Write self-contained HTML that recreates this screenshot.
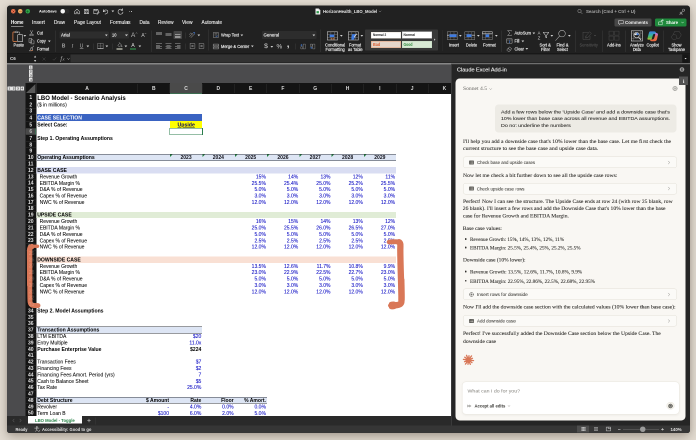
<!DOCTYPE html>
<html lang="en"><head><meta charset="utf-8"><title>HorizonHealth_LBO_Model - Excel</title>
<style>
html,body{margin:0;padding:0;}
body{width:696px;height:440px;overflow:hidden;background:#e3dcd2;position:relative;}
#stage{position:relative;width:696px;height:440px;overflow:hidden;}
#root{position:absolute;left:0;top:0;width:1392px;height:880px;transform:scale(0.5);transform-origin:0 0;
 font-family:"Liberation Sans", sans-serif;overflow:hidden;will-change:transform;}
.a{position:absolute;box-sizing:border-box;}
.t{white-space:nowrap;}
svg{overflow:visible;}
</style></head>
<body>
<div id="stage"><div id="root">
<div class="a" style="left:14px;top:11px;width:1366px;height:854.6px;border-radius:6.4px;box-shadow:0 7px 22px rgba(50,35,20,.34), 0 0 10px rgba(50,35,20,.10);"></div>
<div class="a" id="win" style="left:14px;top:11px;width:1366px;height:854.6px;border-radius:6.4px;overflow:hidden;background:#1e1e1e;"><div class="a" style="left:-14px;top:-11px;width:1392px;height:880px;">
<div class="a" style="left:14px;top:11px;width:1366px;height:95.4px;background:#212121;"></div>
<div class="a" style="left:14px;top:106.4px;width:1366px;height:20.4px;background:#1c1c1c;"></div>
<div class="a" style="left:22.2px;top:18.1px;width:8.8px;height:8.8px;background:#e8744f;border-radius:4.4px;"></div>
<svg class="a" style="left:22.6px;top:18.6px;width:8px;height:8px;" viewBox="-2 -2 4 4"><g fill="none" stroke="#8e2a14" stroke-width="0.5" stroke-linecap="round" stroke-linejoin="round"><path d="M-.9 -.9L.9 .9M.9 -.9L-.9 .9"/></g></svg>
<div class="a" style="left:36.4px;top:18.1px;width:8.8px;height:8.8px;background:#f0ae6a;border-radius:4.4px;"></div>
<svg class="a" style="left:36.8px;top:18.6px;width:8px;height:8px;" viewBox="-2 -2 4 4"><g fill="none" stroke="#b5651a" stroke-width="0.55" stroke-linecap="round" stroke-linejoin="round"><path d="M-1.1 0H1.1"/></g></svg>
<div class="a" style="left:50.8px;top:18.1px;width:8.8px;height:8.8px;background:#32a54b;border-radius:4.4px;"></div>
<svg class="a" style="left:51.2px;top:18.6px;width:8px;height:8px;" viewBox="-2 -2 4 4"><g fill="none" stroke="#0d5c1c" stroke-width="0.5" stroke-linecap="round" stroke-linejoin="round"><path d="M-1 0H1M0 -1V1"/></g></svg>
<div class="a t" style="top:12.6px;font-size:8px;line-height:20px;color:#ececec;font-weight:700;-webkit-text-stroke:0.12px #ececec;transform:scaleX(0.965);transform-origin:0 50%;left:78.4px;">AutoSave</div>
<div class="a" style="left:120.6px;top:18px;width:18.8px;height:9.2px;background:#2b2b2b;border-radius:4.6px;"></div>
<div class="a" style="left:121px;top:18px;width:9.2px;height:9.2px;background:#f4f4f4;border-radius:4.6px;"></div>
<svg class="a" style="left:146px;top:14.6px;width:16px;height:16px;" viewBox="-4 -4 8 8"><g fill="none" stroke="#cfcfcf" stroke-width="0.55" stroke-linecap="round" stroke-linejoin="round"><path d="M-2.4 -.2L0 -2.3L2.4 -.2V2.3H.8V.5H-.8V2.3H-2.4Z"/></g></svg>
<svg class="a" style="left:165px;top:14.6px;width:16px;height:16px;" viewBox="-4 -4 8 8"><g fill="none" stroke="#cfcfcf" stroke-width="0.55" stroke-linecap="round" stroke-linejoin="round"><path d="M-2.2 -2.2H1.4L2.2 -1.4V2.2H-2.2Z M-1.2 -2.2V-.7H1V-2.2 M-1.2 2.2V.5H1.2V2.2"/></g></svg>
<svg class="a" style="left:184px;top:14.6px;width:16px;height:16px;" viewBox="-4 -4 8 8"><g fill="none" stroke="#cfcfcf" stroke-width="0.55" stroke-linecap="round" stroke-linejoin="round"><path d="M-2.2 -2.2H1.4L2.2 -1.4V.2 M-2.2 -2.2V2.2H0 M-1.2 -2.2V-.7H1V-2.2 M.6 2.4L2.6 .2L3.2 .8L1.2 2.8Z"/></g></svg>
<svg class="a" style="left:203px;top:14.6px;width:16px;height:16px;" viewBox="-4 -4 8 8"><g fill="none" stroke="#cfcfcf" stroke-width="0.6" stroke-linecap="round" stroke-linejoin="round"><path d="M-2.2 -1.9V.2H-.1 M-2.1 .1C-1 -2.4 2.4 -2 2.3 .4C2.2 1.8 .8 2.4 -.4 2.6"/></g></svg>
<svg class="a" style="left:222.5px;top:21.3px;width:5.4px;height:3.4px;" viewBox="0 0 2.7 1.7"><path d="M0 0H2.7L1.35 1.7Z" fill="#d4d4d4"/></svg>
<svg class="a" style="left:232.6px;top:14.8px;width:16px;height:16px;" viewBox="-4 -4 8 8"><g fill="none" stroke="#cfcfcf" stroke-width="0.6" stroke-linecap="round" stroke-linejoin="round"><path d="M2.2 -2.9V-1.2H.5 M2 -1.3A2.5 2.5 0 1 0 2.5 .6"/></g></svg>
<div class="a" style="left:254.8px;top:22px;width:1.6px;height:1.6px;background:#dadada;border-radius:0.8px;"></div>
<div class="a" style="left:258.6px;top:22px;width:1.6px;height:1.6px;background:#dadada;border-radius:0.8px;"></div>
<div class="a" style="left:262.4px;top:22px;width:1.6px;height:1.6px;background:#dadada;border-radius:0.8px;"></div>
<svg class="a" style="left:631.2px;top:16.6px;width:9.6px;height:12px;" viewBox="0 0 4.8 6"><path d="M.3 0H3.2L4.8 1.6V5.7Q4.8 6 4.5 6H.3Q0 6 0 5.7V.3Q0 0 .3 0Z" fill="#f2f2f2"/><path d="M3.2 0V1.6H4.8Z" fill="#bdbdbd"/><rect x="1" y="2.6" width="2.4" height="2.2" fill="#2e9a4c"/></svg>
<div class="a t" style="top:12.6px;font-size:9.2px;line-height:20px;color:#e8e8e8;font-weight:700;transform:scaleX(0.915);transform-origin:0 50%;left:645.6px;">HorizonHealth_LBO_Model</div>
<svg class="a" style="left:757.6px;top:22px;width:4px;height:2px;" viewBox="0 0 2 1"><path d="M0 0L1 1L2 0" fill="none" stroke="#9a9a9a" stroke-width="0.45" stroke-linecap="round"/></svg>
<svg class="a" style="left:1154px;top:16.8px;width:12px;height:12px;" viewBox="-3 -3 6 6"><g fill="none" stroke="#a8a8a8" stroke-width="0.5" stroke-linecap="round" stroke-linejoin="round"><circle cx="-.5" cy="-.5" r="1.7"/><path d="M.8 .8L2.3 2.3"/></g></svg>
<div class="a t" style="top:12.8px;font-size:9px;line-height:20px;color:#a9a9a9;font-weight:700;transform:scaleX(0.978);transform-origin:0 50%;left:1171.6px;">Search (Cmd + Ctrl + U)</div>
<svg class="a" style="left:1358.2px;top:15.8px;width:14px;height:14px;" viewBox="-3.5 -3.5 7 7"><g fill="none" stroke="#bdbdbd" stroke-width="0.5" stroke-linecap="round" stroke-linejoin="round"><circle cx="1.1" cy="-1.3" r="1.15"/><circle cx="-1.5" cy="1.5" r="1.0"/><path d="M.3 -.5L-.8 .8"/><path d="M-2.9 3.1C-2.9 2 -.1 2 -.1 3.1" /></g></svg>
<div class="a t" style="top:35px;font-size:10px;line-height:20px;color:#ffffff;font-weight:700;transform:scaleX(0.899);transform-origin:0 50%;left:22px;">Home</div>
<div class="a t" style="top:35px;font-size:10px;line-height:20px;color:#f0f0f0;-webkit-text-stroke:0.2px #f0f0f0;transform:scaleX(1.039);transform-origin:0 50%;left:64px;">Insert</div>
<div class="a t" style="top:35px;font-size:10px;line-height:20px;color:#f0f0f0;-webkit-text-stroke:0.2px #f0f0f0;transform:scaleX(0.942);transform-origin:0 50%;left:108px;">Draw</div>
<div class="a t" style="top:35px;font-size:10px;line-height:20px;color:#f0f0f0;-webkit-text-stroke:0.2px #f0f0f0;transform:scaleX(0.961);transform-origin:0 50%;left:148px;">Page Layout</div>
<div class="a t" style="top:35px;font-size:10px;line-height:20px;color:#f0f0f0;-webkit-text-stroke:0.2px #f0f0f0;transform:scaleX(0.984);transform-origin:0 50%;left:220px;">Formulas</div>
<div class="a t" style="top:35px;font-size:10px;line-height:20px;color:#f0f0f0;-webkit-text-stroke:0.2px #f0f0f0;transform:scaleX(0.947);transform-origin:0 50%;left:279px;">Data</div>
<div class="a t" style="top:35px;font-size:10px;line-height:20px;color:#f0f0f0;-webkit-text-stroke:0.2px #f0f0f0;transform:scaleX(0.945);transform-origin:0 50%;left:316px;">Review</div>
<div class="a t" style="top:35px;font-size:10px;line-height:20px;color:#f0f0f0;-webkit-text-stroke:0.2px #f0f0f0;transform:scaleX(0.977);transform-origin:0 50%;left:364px;">View</div>
<div class="a t" style="top:35px;font-size:10px;line-height:20px;color:#f0f0f0;-webkit-text-stroke:0.2px #f0f0f0;transform:scaleX(0.958);transform-origin:0 50%;left:403px;">Automate</div>
<div class="a" style="left:22px;top:51.6px;width:25px;height:1.6px;background:#e8e8e8;border-radius:0.6px;"></div>
<div class="a" style="left:1229.4px;top:37px;width:73.2px;height:16.2px;background:#474747;border-radius:2.8px;"></div>
<svg class="a" style="left:1236px;top:39px;width:12px;height:12px;" viewBox="-3 -3 6 6"><g fill="none" stroke="#e4e4e4" stroke-width="0.5" stroke-linecap="round" stroke-linejoin="round"><path d="M-2.3 -1.9H2.3V1.2H-.6L-1.6 2.2V1.2H-2.3Z"/></g></svg>
<div class="a t" style="top:35px;font-size:9.4px;line-height:20px;color:#f2f2f2;font-weight:700;transform:scaleX(0.949);transform-origin:0 50%;left:1250.4px;">Comments</div>
<div class="a" style="left:1310px;top:36.6px;width:63.2px;height:16.8px;background:#1f8a3c;border-radius:3px;"></div>
<svg class="a" style="left:1315px;top:38px;width:14px;height:14px;" viewBox="-3.5 -3.5 7 7"><g fill="none" stroke="#e9f5ec" stroke-width="0.5" stroke-linecap="round" stroke-linejoin="round"><rect x="-2.2" y="-.6" width="3.4" height="2.9"/><path d="M.2 -.6V-2.3H2.4 M1.4 -3.2L2.5 -2.3L1.4 -1.4"/></g></svg>
<div class="a t" style="top:35px;font-size:9.4px;line-height:20px;color:#ffffff;font-weight:700;transform:scaleX(0.921);transform-origin:0 50%;left:1332.4px;">Share</div>
<svg class="a" style="left:1363px;top:44.3px;width:4.4px;height:2.2px;" viewBox="0 0 2.2 1.1"><path d="M0 0L1.1 1.1L2.2 0" fill="none" stroke="#d6ecd9" stroke-width="0.5" stroke-linecap="round"/></svg>
<svg class="a" style="left:24.8px;top:60.8px;width:21.2px;height:23.2px;" viewBox="0 0 10.6 11.6"><path d="M4.4 1.5H6.6Q7.3 1.5 7.3 2.2V3.8" fill="none" stroke="#b9b9b9" stroke-width=".55"/><path d="M2.6 1.5H1Q.4 1.5 .4 2.2V10.2Q.4 10.9 1 10.9H4.6" fill="none" stroke="#e8834a" stroke-width=".75"/><path d="M2.4 2.2V1.2H3Q3.8 -.2 4.6 1.2H5.2V2.2Z" fill="none" stroke="#c4c4c4" stroke-width=".5"/><rect x="5.1" y="4.2" width="5.1" height="7" rx=".5" fill="#272727" stroke="#cdcdcd" stroke-width=".6"/></svg>
<svg class="a" style="left:47.3px;top:69.5px;width:5.4px;height:3.4px;" viewBox="0 0 2.7 1.7"><path d="M0 0H2.7L1.35 1.7Z" fill="#d4d4d4"/></svg>
<div class="a t" style="top:80.2px;font-size:8.9px;line-height:20px;color:#f0f0f0;-webkit-text-stroke:0.26px #f0f0f0;transform:scaleX(0.916);transform-origin:0 50%;left:27.2px;">Paste</div>
<svg class="a" style="left:56px;top:59px;width:14px;height:14px;" viewBox="-3.5 -3.5 7 7"><g fill="none" stroke="#b2b2b2" stroke-width="0.5" stroke-linecap="round" stroke-linejoin="round"><path d="M-1.3 -2.6L.9 1.2M1.3 -2.6L-.9 1.2"/><circle cx="-1.1" cy="2" r=".8"/><circle cx="1.1" cy="2" r=".8"/></g></svg>
<div class="a t" style="top:56px;font-size:8.9px;line-height:20px;color:#f0f0f0;-webkit-text-stroke:0.26px #f0f0f0;transform:scaleX(0.869);transform-origin:0 50%;left:74px;">Cut</div>
<svg class="a" style="left:56.2px;top:75px;width:14px;height:14px;" viewBox="-3.5 -3.5 7 7"><g fill="none" stroke="#b2b2b2" stroke-width="0.5" stroke-linecap="round" stroke-linejoin="round"><path d="M-2.3 -2.6H.3V1.6H-2.3Z M-.4 -1.2H1.5L2.5 -.2V2.9H-.4Z"/></g></svg>
<div class="a t" style="top:72px;font-size:8.9px;line-height:20px;color:#f0f0f0;-webkit-text-stroke:0.26px #f0f0f0;transform:scaleX(0.840);transform-origin:0 50%;left:74px;">Copy</div>
<svg class="a" style="left:95.7px;top:80.7px;width:5.4px;height:3.4px;" viewBox="0 0 2.7 1.7"><path d="M0 0H2.7L1.35 1.7Z" fill="#d4d4d4"/></svg>
<svg class="a" style="left:57px;top:90.2px;width:14px;height:14px;" viewBox="-3.5 -3.5 7 7"><g fill="none" stroke="#b2b2b2" stroke-width="0.55" stroke-linecap="round" stroke-linejoin="round"><path d="M1.8 -2.6L-.2 -.4 M-.9 -1L.9 .6L-.6 2.4H-2.6Q-1.2 1 -.9 -1Z" /></g></svg>
<div class="a" style="left:61.2px;top:100.6px;width:5.2px;height:1.2px;background:#e8834a;"></div>
<div class="a t" style="top:87.6px;font-size:8.9px;line-height:20px;color:#f0f0f0;-webkit-text-stroke:0.26px #f0f0f0;transform:scaleX(0.854);transform-origin:0 50%;left:74px;">Format</div>
<div class="a" style="left:110.75px;top:61px;width:0.9px;height:43px;background:#3c3c3c;"></div>
<div class="a" style="left:118.8px;top:62.8px;width:98.8px;height:14.6px;background:#2d2d2d;border-radius:1.6px;"></div>
<div class="a t" style="top:60px;font-size:8.9px;line-height:20px;color:#f0f0f0;-webkit-text-stroke:0.26px #f0f0f0;transform:scaleX(0.991);transform-origin:0 50%;left:122.4px;">Arial</div>
<svg class="a" style="left:210.1px;top:68.7px;width:5.4px;height:3.4px;" viewBox="0 0 2.7 1.7"><path d="M0 0H2.7L1.35 1.7Z" fill="#d4d4d4"/></svg>
<div class="a" style="left:221.2px;top:62.8px;width:36.4px;height:14.6px;background:#2d2d2d;border-radius:1.6px;"></div>
<div class="a t" style="top:60px;font-size:8.9px;line-height:20px;color:#f0f0f0;-webkit-text-stroke:0.26px #f0f0f0;transform:scaleX(0.891);transform-origin:0 50%;left:224.4px;">10</div>
<svg class="a" style="left:250.1px;top:68.7px;width:5.4px;height:3.4px;" viewBox="0 0 2.7 1.7"><path d="M0 0H2.7L1.35 1.7Z" fill="#d4d4d4"/></svg>
<div class="a t" style="top:60.4px;font-size:12.8px;line-height:20px;color:#bcbcbc;left:262px;">A</div>
<svg class="a" style="left:270.2px;top:63px;width:6px;height:6px;" viewBox="-1.5 -1.5 3 3"><g fill="none" stroke="#b2b2b2" stroke-width="0.4" stroke-linecap="round" stroke-linejoin="round"><path d="M-.7 .4L0 -.4L.7 .4"/></g></svg>
<div class="a t" style="top:61.2px;font-size:10.4px;line-height:20px;color:#bcbcbc;left:282.4px;">A</div>
<svg class="a" style="left:288.2px;top:63.8px;width:6px;height:6px;" viewBox="-1.5 -1.5 3 3"><g fill="none" stroke="#b2b2b2" stroke-width="0.4" stroke-linecap="round" stroke-linejoin="round"><path d="M-.6 -.3L0 .4L.6 -.3"/></g></svg>
<div class="a t" style="top:82.4px;font-size:10px;line-height:20px;color:#a2a2a2;font-weight:700;left:123.6px;">B</div>
<div class="a t" style="top:82.4px;font-size:10px;line-height:20px;color:#b4b4b4;font-family:'Liberation Serif', serif;font-style:italic;left:143.2px;">I</div>
<div class="a t" style="top:82.4px;font-size:10px;line-height:20px;color:#b4b4b4;text-decoration:underline;left:159.6px;">U</div>
<svg class="a" style="left:172.5px;top:91.1px;width:5.4px;height:3.4px;" viewBox="0 0 2.7 1.7"><path d="M0 0H2.7L1.35 1.7Z" fill="#d4d4d4"/></svg>
<div class="a" style="left:186.55px;top:87px;width:0.9px;height:11.6px;background:#3c3c3c;"></div>
<svg class="a" style="left:194px;top:85.4px;width:14px;height:14px;" viewBox="-3.5 -3.5 7 7"><g fill="none" stroke="#8e8e8e" stroke-width="0.45" stroke-linecap="round" stroke-linejoin="round"><rect x="-2.7" y="-2.7" width="5.4" height="5.4"/><path d="M0 -2.7V2.7M-2.7 0H2.7" stroke-width=".35"/><path d="M-2.7 2.7H2.7" stroke="#d0d0d0" stroke-width=".6"/></g></svg>
<svg class="a" style="left:211.3px;top:91.1px;width:5.4px;height:3.4px;" viewBox="0 0 2.7 1.7"><path d="M0 0H2.7L1.35 1.7Z" fill="#d4d4d4"/></svg>
<div class="a" style="left:224.55px;top:87px;width:0.9px;height:11.6px;background:#3c3c3c;"></div>
<svg class="a" style="left:231.6px;top:83.4px;width:14px;height:14px;" viewBox="-3.5 -3.5 7 7"><g fill="none" stroke="#b2b2b2" stroke-width="0.5" stroke-linecap="round" stroke-linejoin="round"><path d="M-1.6 .3L.3 -1.8L2 0L.1 1.9Z M-.4 -2.6L.3 -1.8 M2.3 .8Q2.9 1.7 2.3 2Q1.7 1.7 2.3 .8"/></g></svg>
<div class="a" style="left:232.8px;top:97px;width:12px;height:1.8px;background:#f3f6e2;"></div>
<svg class="a" style="left:249.3px;top:91.1px;width:5.4px;height:3.4px;" viewBox="0 0 2.7 1.7"><path d="M0 0H2.7L1.35 1.7Z" fill="#d4d4d4"/></svg>
<div class="a t" style="top:80.8px;font-size:10.4px;line-height:20px;color:#d8d8d8;left:66px;width:400px;text-align:center;"><span>A</span></div>
<div class="a" style="left:260.2px;top:97px;width:11.6px;height:1.8px;background:#35a853;"></div>
<svg class="a" style="left:276.5px;top:91.1px;width:5.4px;height:3.4px;" viewBox="0 0 2.7 1.7"><path d="M0 0H2.7L1.35 1.7Z" fill="#d4d4d4"/></svg>
<div class="a" style="left:302.75px;top:61px;width:0.9px;height:43px;background:#3c3c3c;"></div>
<div class="a" style="left:312.4px;top:64.56px;width:11.2px;height:0.88px;background:#a6a6a6;"></div>
<div class="a" style="left:312.4px;top:66.76px;width:11.2px;height:0.88px;background:#a6a6a6;"></div>
<div class="a" style="left:312.4px;top:68.96px;width:11.2px;height:0.88px;background:#a6a6a6;"></div>
<div class="a" style="left:331.4px;top:66.96px;width:11.2px;height:0.88px;background:#a6a6a6;"></div>
<div class="a" style="left:331.4px;top:69.16px;width:11.2px;height:0.88px;background:#a6a6a6;"></div>
<div class="a" style="left:331.4px;top:71.36px;width:11.2px;height:0.88px;background:#a6a6a6;"></div>
<div class="a" style="left:347px;top:62px;width:17.4px;height:15.8px;background:#464646;border-radius:1.8px;"></div>
<div class="a" style="left:350px;top:69.36px;width:11.2px;height:0.88px;background:#e2e2e2;"></div>
<div class="a" style="left:350px;top:71.56px;width:11.2px;height:0.88px;background:#e2e2e2;"></div>
<div class="a" style="left:350px;top:73.76px;width:11.2px;height:0.88px;background:#e2e2e2;"></div>
<div class="a" style="left:312.4px;top:87.16px;width:11.2px;height:0.88px;background:#a6a6a6;"></div>
<div class="a" style="left:312.4px;top:89.56px;width:7.2px;height:0.88px;background:#a6a6a6;"></div>
<div class="a" style="left:312.4px;top:91.96px;width:11.2px;height:0.88px;background:#a6a6a6;"></div>
<div class="a" style="left:312.4px;top:94.36px;width:7.2px;height:0.88px;background:#a6a6a6;"></div>
<div class="a" style="left:312.4px;top:96.76px;width:11.2px;height:0.88px;background:#a6a6a6;"></div>
<div class="a" style="left:331.4px;top:87.16px;width:11.2px;height:0.88px;background:#a6a6a6;"></div>
<div class="a" style="left:333.4px;top:89.56px;width:7.2px;height:0.88px;background:#a6a6a6;"></div>
<div class="a" style="left:331.4px;top:91.96px;width:11.2px;height:0.88px;background:#a6a6a6;"></div>
<div class="a" style="left:333.4px;top:94.36px;width:7.2px;height:0.88px;background:#a6a6a6;"></div>
<div class="a" style="left:331.4px;top:96.76px;width:11.2px;height:0.88px;background:#a6a6a6;"></div>
<div class="a" style="left:349.6px;top:87.16px;width:11.2px;height:0.88px;background:#a6a6a6;"></div>
<div class="a" style="left:353.6px;top:89.56px;width:7.2px;height:0.88px;background:#a6a6a6;"></div>
<div class="a" style="left:349.6px;top:91.96px;width:11.2px;height:0.88px;background:#a6a6a6;"></div>
<div class="a" style="left:353.6px;top:94.36px;width:7.2px;height:0.88px;background:#a6a6a6;"></div>
<div class="a" style="left:349.6px;top:96.76px;width:11.2px;height:0.88px;background:#a6a6a6;"></div>
<div class="a" style="left:370.15px;top:65px;width:0.9px;height:12px;background:#3c3c3c;"></div>
<div class="a" style="left:370.15px;top:87px;width:0.9px;height:11.6px;background:#3c3c3c;"></div>
<svg class="a" style="left:377px;top:63px;width:14px;height:14px;" viewBox="-3.5 -3.5 7 7"><g fill="none" stroke="#b2b2b2" stroke-width="0.5" stroke-linecap="round" stroke-linejoin="round"><path d="M-2.4 1.6L1 -1.8M-1.1 2.6L2.3 -.8" stroke-width=".5"/><path d="M1.2 -2.6H2.8V-1" stroke="#4a86e8"/><path d="M-2.6 -.4L-1.2 -2.2L.2 -.6" stroke-width=".4"/></g></svg>
<svg class="a" style="left:395.3px;top:68.7px;width:5.4px;height:3.4px;" viewBox="0 0 2.7 1.7"><path d="M0 0H2.7L1.35 1.7Z" fill="#d4d4d4"/></svg>
<svg class="a" style="left:378px;top:85.4px;width:14px;height:14px;" viewBox="-3.5 -3.5 7 7"><g fill="none" stroke="#b2b2b2" stroke-width="0.5" stroke-linecap="round" stroke-linejoin="round"><path d="M-2.4 -2.4V2.4 M-2.4 -2.4H2.4V2.4H-2.4" stroke-width=".4"/><path d="M1.4 0H-1M-.1 -.9L-1 0L-.1 .9"/></g></svg>
<svg class="a" style="left:396px;top:85.4px;width:14px;height:14px;" viewBox="-3.5 -3.5 7 7"><g fill="none" stroke="#b2b2b2" stroke-width="0.5" stroke-linecap="round" stroke-linejoin="round"><path d="M-2.4 -2.4V2.4 M-2.4 -2.4H2.4V2.4H-2.4" stroke-width=".4"/><path d="M-1.4 0H1M.1 -.9L1 0L.1 .9"/></g></svg>
<div class="a" style="left:417.15px;top:59px;width:0.9px;height:42px;background:#3c3c3c;"></div>
<svg class="a" style="left:425px;top:63px;width:14px;height:14px;" viewBox="-3.5 -3.5 7 7"><g fill="none" stroke="#b2b2b2" stroke-width="0.5" stroke-linecap="round" stroke-linejoin="round"><path d="M-2.4 -2.6H2.4V2.6H-2.4Z" stroke-width=".4"/><path d="M-1.3 -1.2H1.3M-1.3 0H.9" stroke-width=".4"/><path d="M-.2 1.4H1.1Q1.7 1 1.1 .4" stroke="#4a86e8"/></g></svg>
<div class="a t" style="top:60px;font-size:8.9px;line-height:20px;color:#f0f0f0;-webkit-text-stroke:0.26px #f0f0f0;transform:scaleX(0.909);transform-origin:0 50%;left:442px;">Wrap Text</div>
<svg class="a" style="left:481.3px;top:68.7px;width:5.4px;height:3.4px;" viewBox="0 0 2.7 1.7"><path d="M0 0H2.7L1.35 1.7Z" fill="#d4d4d4"/></svg>
<svg class="a" style="left:425px;top:85.6px;width:14px;height:14px;" viewBox="-3.5 -3.5 7 7"><g fill="none" stroke="#b2b2b2" stroke-width="0.5" stroke-linecap="round" stroke-linejoin="round"><rect x="-2.6" y="-2.4" width="5.2" height="4.8" stroke-width=".45"/><path d="M-2.6 -.9H2.6M-2.6 .9H2.6" stroke-width=".35"/><path d="M-1.5 0H1.5M-.9 -.5L-1.5 0L-.9 .5M.9 -.5L1.5 0L.9 .5" stroke-width=".35"/></g></svg>
<div class="a t" style="top:82.6px;font-size:8.9px;line-height:20px;color:#f0f0f0;-webkit-text-stroke:0.26px #f0f0f0;transform:scaleX(0.900);transform-origin:0 50%;left:442px;">Merge &amp; Center</div>
<svg class="a" style="left:501.7px;top:91.3px;width:5.4px;height:3.4px;" viewBox="0 0 2.7 1.7"><path d="M0 0H2.7L1.35 1.7Z" fill="#d4d4d4"/></svg>
<div class="a" style="left:523.8px;top:62.4px;width:109.2px;height:15.2px;background:#2d2d2d;border-radius:1.6px;"></div>
<div class="a t" style="top:60px;font-size:8.9px;line-height:20px;color:#f0f0f0;-webkit-text-stroke:0.26px #f0f0f0;transform:scaleX(0.988);transform-origin:0 50%;left:527.2px;">General</div>
<svg class="a" style="left:624.9px;top:68.7px;width:5.4px;height:3.4px;" viewBox="0 0 2.7 1.7"><path d="M0 0H2.7L1.35 1.7Z" fill="#d4d4d4"/></svg>
<div class="a t" style="top:82.4px;font-size:13.6px;line-height:20px;color:#d6d6d6;left:332px;width:400px;text-align:center;"><span>$</span></div>
<svg class="a" style="left:541.3px;top:91.5px;width:5.4px;height:3.4px;" viewBox="0 0 2.7 1.7"><path d="M0 0H2.7L1.35 1.7Z" fill="#d4d4d4"/></svg>
<div class="a t" style="top:82.6px;font-size:12.8px;line-height:20px;color:#d6d6d6;left:358.8px;width:400px;text-align:center;"><span>%</span></div>
<div class="a t" style="top:77.2px;font-size:20px;line-height:20px;color:#d6d6d6;font-weight:700;left:376.4px;width:400px;text-align:center;"><span>,</span></div>
<div class="a" style="left:590.55px;top:87px;width:0.9px;height:11.6px;background:#3c3c3c;"></div>
<svg class="a" style="left:599px;top:85.6px;width:14px;height:14px;" viewBox="-3.5 -3.5 7 7"><g fill="none" stroke="#b2b2b2" stroke-width="0.5" stroke-linecap="round" stroke-linejoin="round"><path d="M.4 -2.4H2.4V2.4H.4Z M-2 .2H-.4V2.4H-2Z" stroke-width=".4" stroke="#9a9a9a"/><path d="M-2.4 -1.4H-.6M-1.5 -2.3V-.5" stroke="#4a86e8" stroke-width=".45"/></g></svg>
<svg class="a" style="left:618px;top:85.6px;width:14px;height:14px;" viewBox="-3.5 -3.5 7 7"><g fill="none" stroke="#b2b2b2" stroke-width="0.5" stroke-linecap="round" stroke-linejoin="round"><path d="M.4 -2.4H2.4V2.4H.4Z M-2 -2.4H-.4V-.2H-2Z" stroke-width=".4" stroke="#9a9a9a"/><path d="M-2.4 1.4H-.4M-1.2 .6L-.4 1.4L-1.2 2.2" stroke="#4a86e8" stroke-width=".45"/></g></svg>
<div class="a" style="left:640.75px;top:59px;width:0.9px;height:45px;background:#3c3c3c;"></div>
<svg class="a" style="left:654.4px;top:62.8px;width:21.6px;height:17.6px;" viewBox="0 0 10.8 8.8"><rect x=".3" y=".3" width="10.2" height="8.2" fill="none" stroke="#cfcfcf" stroke-width=".55"/><path d="M.3 3.168 H10.5 M.3 5.984 H10.5 M3.888 .3V8.5 M7.344 .3V8.5" stroke="#9c9c9c" stroke-width=".35" fill="none"/><rect x="2.6" y="3.1" width="4.6" height="2.4" fill="#3f7be0"/><rect x="4.4" y="6.4" width=".9" height="1.6" fill="#e8834a"/><rect x="6.4" y="6.4" width=".9" height="1.6" fill="#e8834a"/></svg>
<svg class="a" style="left:679.9px;top:69.5px;width:5.4px;height:3.4px;" viewBox="0 0 2.7 1.7"><path d="M0 0H2.7L1.35 1.7Z" fill="#d4d4d4"/></svg>
<div class="a t" style="top:80.4px;font-size:8.9px;line-height:20px;color:#f0f0f0;-webkit-text-stroke:0.26px #f0f0f0;transform:scaleX(0.910);transform-origin:0 50%;left:650px;">Conditional</div>
<div class="a t" style="top:89.4px;font-size:8.9px;line-height:20px;color:#f0f0f0;-webkit-text-stroke:0.26px #f0f0f0;transform:scaleX(0.905);transform-origin:0 50%;left:650.8px;">Formatting</div>
<svg class="a" style="left:696px;top:62.8px;width:21.2px;height:17.6px;" viewBox="0 0 10.6 8.8"><rect x=".3" y=".3" width="10" height="8.2" fill="none" stroke="#cfcfcf" stroke-width=".55"/><path d="M.3 3.168 H10.3 M.3 5.984 H10.3 M3.816 .3V8.5 M7.208 .3V8.5" stroke="#9c9c9c" stroke-width=".35" fill="none"/><path d="M4.2 2.6H7.4V5.4L5.6 8.2H3.4V5.2Z" fill="#3f7be0"/><path d="M8.6 2.2L6.2 5.8" stroke="#d8d8d8" stroke-width=".9" fill="none"/></svg>
<svg class="a" style="left:720.5px;top:69.5px;width:5.4px;height:3.4px;" viewBox="0 0 2.7 1.7"><path d="M0 0H2.7L1.35 1.7Z" fill="#d4d4d4"/></svg>
<div class="a t" style="top:80.4px;font-size:8.9px;line-height:20px;color:#f0f0f0;-webkit-text-stroke:0.26px #f0f0f0;transform:scaleX(0.854);transform-origin:0 50%;left:698.4px;">Format</div>
<div class="a t" style="top:89.4px;font-size:8.9px;line-height:20px;color:#f0f0f0;-webkit-text-stroke:0.26px #f0f0f0;transform:scaleX(0.887);transform-origin:0 50%;left:696px;">as Table</div>
<div class="a" style="left:729.6px;top:59.4px;width:146.4px;height:41.6px;background:#383838;border-radius:1.6px;"></div>
<div class="a" style="left:742px;top:63.6px;width:60.4px;height:13.4px;background:#ffffff;border:0.7px solid #e9e2d8;"></div>
<div class="a t" style="top:60.4px;font-size:6.6px;line-height:20px;color:#222;font-weight:700;transform:scaleX(0.936);transform-origin:0 50%;left:745.6px;">Normal 2</div>
<div class="a" style="left:803.8px;top:63.2px;width:60.4px;height:14px;background:#ffffff;border:0.9px solid #cfcfcf;"></div>
<div class="a t" style="top:60.4px;font-size:6.6px;line-height:20px;color:#222;font-weight:700;transform:scaleX(1.021);transform-origin:0 50%;left:806.8px;">Normal</div>
<div class="a" style="left:742px;top:82.2px;width:60.4px;height:13.8px;background:#e4d6cb;border:0.9px solid #e39a74;"></div>
<div class="a t" style="top:79.2px;font-size:8.8px;line-height:20px;color:#dc5b2e;font-weight:700;transform:scaleX(0.866);transform-origin:0 50%;left:745.6px;">Bad</div>
<div class="a" style="left:803.8px;top:82px;width:60.4px;height:14.2px;background:#d9ead5;border:0.8px solid #c4d9bf;"></div>
<div class="a t" style="top:79.2px;font-size:8.8px;line-height:20px;color:#2f8a3c;font-weight:700;transform:scaleX(0.784);transform-origin:0 50%;left:806.8px;">Good</div>
<svg class="a" style="left:868.4px;top:77.2px;width:3px;height:4.4px;" viewBox="0 0 1.5 2.2"><path d="M0 0L1.5 1.1L0 2.2Z" fill="#c8c8c8"/></svg>
<div class="a" style="left:884px;top:61.2px;width:0.8px;height:1px;background:#3a3a3a;"></div>
<div class="a" style="left:884px;top:63.2px;width:0.8px;height:1px;background:#3a3a3a;"></div>
<div class="a" style="left:884px;top:65.2px;width:0.8px;height:1px;background:#3a3a3a;"></div>
<div class="a" style="left:884px;top:67.2px;width:0.8px;height:1px;background:#3a3a3a;"></div>
<div class="a" style="left:884px;top:69.2px;width:0.8px;height:1px;background:#3a3a3a;"></div>
<div class="a" style="left:884px;top:71.2px;width:0.8px;height:1px;background:#3a3a3a;"></div>
<div class="a" style="left:884px;top:73.2px;width:0.8px;height:1px;background:#3a3a3a;"></div>
<div class="a" style="left:884px;top:75.2px;width:0.8px;height:1px;background:#3a3a3a;"></div>
<div class="a" style="left:884px;top:77.2px;width:0.8px;height:1px;background:#3a3a3a;"></div>
<div class="a" style="left:884px;top:79.2px;width:0.8px;height:1px;background:#3a3a3a;"></div>
<div class="a" style="left:884px;top:81.2px;width:0.8px;height:1px;background:#3a3a3a;"></div>
<div class="a" style="left:884px;top:83.2px;width:0.8px;height:1px;background:#3a3a3a;"></div>
<div class="a" style="left:884px;top:85.2px;width:0.8px;height:1px;background:#3a3a3a;"></div>
<div class="a" style="left:884px;top:87.2px;width:0.8px;height:1px;background:#3a3a3a;"></div>
<div class="a" style="left:884px;top:89.2px;width:0.8px;height:1px;background:#3a3a3a;"></div>
<div class="a" style="left:884px;top:91.2px;width:0.8px;height:1px;background:#3a3a3a;"></div>
<div class="a" style="left:884px;top:93.2px;width:0.8px;height:1px;background:#3a3a3a;"></div>
<div class="a" style="left:884px;top:95.2px;width:0.8px;height:1px;background:#3a3a3a;"></div>
<div class="a" style="left:884px;top:97.2px;width:0.8px;height:1px;background:#3a3a3a;"></div>
<div class="a" style="left:884px;top:99.2px;width:0.8px;height:1px;background:#3a3a3a;"></div>
<div class="a" style="left:884px;top:101.2px;width:0.8px;height:1px;background:#3a3a3a;"></div>
<svg class="a" style="left:893.8px;top:63px;width:21.2px;height:16.8px;" viewBox="0 0 10.6 8.4"><rect x=".3" y=".3" width="10" height="7.8" fill="none" stroke="#9a9a9a" stroke-width=".45"/><path d="M.3 2.7H10.3M.3 5.7H10.3M3.6 .3V8.1M7.0 .3V8.1" stroke="#8a8a8a" stroke-width=".35" fill="none"/><rect x="2.4" y="2.9" width="7.2" height="2.6" fill="#3f7be0"/><path d="M0 4.2H2.2" stroke="#e0e0e0" stroke-width=".5"/></svg>
<svg class="a" style="left:918.3px;top:69.5px;width:5.4px;height:3.4px;" viewBox="0 0 2.7 1.7"><path d="M0 0H2.7L1.35 1.7Z" fill="#d4d4d4"/></svg>
<div class="a t" style="top:80.2px;font-size:8.9px;line-height:20px;color:#f0f0f0;-webkit-text-stroke:0.26px #f0f0f0;transform:scaleX(0.901);transform-origin:0 50%;left:898.4px;">Insert</div>
<svg class="a" style="left:929px;top:63px;width:21.2px;height:16.8px;" viewBox="0 0 10.6 8.4"><rect x=".3" y=".3" width="10" height="7.8" fill="none" stroke="#9a9a9a" stroke-width=".45"/><path d="M.3 2.7H10.3M.3 5.7H10.3M3.6 .3V8.1M7.0 .3V8.1" stroke="#8a8a8a" stroke-width=".35" fill="none"/><rect x="2.0" y="2.9" width="5.0" height="2.6" fill="#3f7be0"/><path d="M7.4 4.2H10.4" stroke="#e0e0e0" stroke-width=".5"/></svg>
<svg class="a" style="left:953.7px;top:69.5px;width:5.4px;height:3.4px;" viewBox="0 0 2.7 1.7"><path d="M0 0H2.7L1.35 1.7Z" fill="#d4d4d4"/></svg>
<div class="a t" style="top:80.2px;font-size:8.9px;line-height:20px;color:#f0f0f0;-webkit-text-stroke:0.26px #f0f0f0;transform:scaleX(0.857);transform-origin:0 50%;left:932.4px;">Delete</div>
<svg class="a" style="left:964.4px;top:63px;width:21.2px;height:16.8px;" viewBox="0 0 10.6 8.4"><rect x=".3" y=".3" width="10" height="7.8" fill="none" stroke="#9a9a9a" stroke-width=".45"/><path d="M.3 2.7H10.3M.3 5.7H10.3M3.6 .3V8.1M7.0 .3V8.1" stroke="#8a8a8a" stroke-width=".35" fill="none"/><rect x="3.6" y="2.9" width="3.5" height="2.7" fill="#3f7be0"/><path d="M.3 .3H10.3V2.2H.3Z" fill="none" stroke="#d8d8d8" stroke-width=".5"/></svg>
<svg class="a" style="left:989.7px;top:69.5px;width:5.4px;height:3.4px;" viewBox="0 0 2.7 1.7"><path d="M0 0H2.7L1.35 1.7Z" fill="#d4d4d4"/></svg>
<div class="a t" style="top:80.2px;font-size:8.9px;line-height:20px;color:#f0f0f0;-webkit-text-stroke:0.26px #f0f0f0;transform:scaleX(0.911);transform-origin:0 50%;left:966.4px;">Format</div>
<div class="a" style="left:1003.35px;top:61px;width:0.9px;height:43px;background:#3c3c3c;"></div>
<svg class="a" style="left:1012px;top:59px;width:14px;height:14px;" viewBox="-3.5 -3.5 7 7"><g fill="none" stroke="#b2b2b2" stroke-width="0.5" stroke-linecap="round" stroke-linejoin="round"><path d="M2 -1.9V-2.5H-2L.4 0L-2 2.5H2V1.9"/></g></svg>
<div class="a t" style="top:56px;font-size:8.9px;line-height:20px;color:#f0f0f0;-webkit-text-stroke:0.26px #f0f0f0;transform:scaleX(0.898);transform-origin:0 50%;left:1029.2px;">AutoSum</div>
<svg class="a" style="left:1064.5px;top:64.7px;width:5.4px;height:3.4px;" viewBox="0 0 2.7 1.7"><path d="M0 0H2.7L1.35 1.7Z" fill="#d4d4d4"/></svg>
<svg class="a" style="left:1012px;top:75px;width:14px;height:14px;" viewBox="-3.5 -3.5 7 7"><g fill="none" stroke="#b2b2b2" stroke-width="0.5" stroke-linecap="round" stroke-linejoin="round"><rect x="-2.6" y="-2.2" width="5.2" height="4.4"/><path d="M-2.6 -1H2.6" stroke-width=".35"/><path d="M0 -.4V1.5M-.7 .8L0 1.5L.7 .8" stroke="#4a86e8"/></g></svg>
<div class="a t" style="top:72px;font-size:8.9px;line-height:20px;color:#f0f0f0;-webkit-text-stroke:0.26px #f0f0f0;transform:scaleX(0.846);transform-origin:0 50%;left:1029.2px;">Fill</div>
<svg class="a" style="left:1043.3px;top:80.7px;width:5.4px;height:3.4px;" viewBox="0 0 2.7 1.7"><path d="M0 0H2.7L1.35 1.7Z" fill="#d4d4d4"/></svg>
<svg class="a" style="left:1012px;top:90.6px;width:14px;height:14px;" viewBox="-3.5 -3.5 7 7"><g fill="none" stroke="#b2b2b2" stroke-width="0.5" stroke-linecap="round" stroke-linejoin="round"><path d="M-.2 -2L2.2 -.4L.2 2.2H-1.6L-2.6 1.2Z M-1.4 -.2L.9 1.3"/></g></svg>
<div class="a t" style="top:87.6px;font-size:8.9px;line-height:20px;color:#f0f0f0;-webkit-text-stroke:0.26px #f0f0f0;transform:scaleX(0.886);transform-origin:0 50%;left:1029.2px;">Clear</div>
<svg class="a" style="left:1051.3px;top:96.3px;width:5.4px;height:3.4px;" viewBox="0 0 2.7 1.7"><path d="M0 0H2.7L1.35 1.7Z" fill="#d4d4d4"/></svg>
<div class="a t" style="top:56px;font-size:8.4px;line-height:20px;color:#d8d8d8;left:1075.2px;">A</div>
<div class="a t" style="top:65.8px;font-size:8.4px;line-height:20px;color:#d8d8d8;left:1075.4px;">Z</div>
<svg class="a" style="left:1083.6px;top:62.4px;width:16px;height:16px;" viewBox="-4 -4 8 8"><g fill="none" stroke="#d0d0d0" stroke-width="0.55" stroke-linecap="round" stroke-linejoin="round"><path d="M-2.8 -2.6H2.8L.6 .2V2.8L-.6 2V.2Z"/></g></svg>
<svg class="a" style="left:1100.5px;top:69.5px;width:5.4px;height:3.4px;" viewBox="0 0 2.7 1.7"><path d="M0 0H2.7L1.35 1.7Z" fill="#d4d4d4"/></svg>
<div class="a t" style="top:80.2px;font-size:8.9px;line-height:20px;color:#f0f0f0;-webkit-text-stroke:0.26px #f0f0f0;transform:scaleX(0.924);transform-origin:0 50%;left:1079.2px;">Sort &amp;</div>
<div class="a t" style="top:89.2px;font-size:8.9px;line-height:20px;color:#f0f0f0;-webkit-text-stroke:0.26px #f0f0f0;transform:scaleX(0.912);transform-origin:0 50%;left:1082px;">Filter</div>
<svg class="a" style="left:1108px;top:58.8px;width:24px;height:24px;" viewBox="-6 -6 12 12"><g fill="none" stroke="#b2b2b2" stroke-width="0.55" stroke-linecap="round" stroke-linejoin="round"><circle cx="2" cy="-1.9" r="3.3"/><path d="M-.4 .6L-4.4 5"/></g></svg>
<svg class="a" style="left:1136.3px;top:69.5px;width:5.4px;height:3.4px;" viewBox="0 0 2.7 1.7"><path d="M0 0H2.7L1.35 1.7Z" fill="#d4d4d4"/></svg>
<div class="a t" style="top:80.2px;font-size:8.9px;line-height:20px;color:#f0f0f0;-webkit-text-stroke:0.26px #f0f0f0;transform:scaleX(0.935);transform-origin:0 50%;left:1113.2px;">Find &amp;</div>
<div class="a t" style="top:89.2px;font-size:8.9px;line-height:20px;color:#f0f0f0;-webkit-text-stroke:0.26px #f0f0f0;transform:scaleX(0.875);transform-origin:0 50%;left:1114.4px;">Select</div>
<div class="a" style="left:1150.35px;top:61px;width:0.9px;height:43px;background:#3c3c3c;"></div>
<svg class="a" style="left:1163px;top:59.8px;width:22px;height:22px;" viewBox="-5.5 -5.5 11 11"><g fill="none" stroke="#4e4e4e" stroke-width="0.5" stroke-linecap="round" stroke-linejoin="round"><path d="M-4 -3.2H1.2 M-4 -3.2V4H3V.6"/><path d="M-1.2 .6L2.6 -3.8L4.4 -2.2L.6 2.2Z M-1.2 .6L-1.6 2.6L.6 2.2"/></g></svg>
<svg class="a" style="left:1188.4px;top:70px;width:4px;height:2.4px;" viewBox="0 0 2 1.2"><path d="M0 0H2L1 1.2Z" fill="#555"/></svg>
<div class="a t" style="top:80.2px;font-size:9.2px;line-height:20px;color:#5c5c5c;transform:scaleX(0.890);transform-origin:0 50%;left:1159.2px;">Sensitivity</div>
<div class="a" style="left:1204.55px;top:61px;width:0.9px;height:43px;background:#3c3c3c;"></div>
<svg class="a" style="left:1217px;top:59.8px;width:22px;height:22px;" viewBox="-5.5 -5.5 11 11"><g fill="none" stroke="#464646" stroke-width="0.55" stroke-linecap="round" stroke-linejoin="round"><rect x="-5" y="-4.4" width="4.4" height="4"/><rect x=".6" y="-4.4" width="4.4" height="4"/><rect x="-5" y=".6" width="4.4" height="4"/><rect x=".6" y=".6" width="4.4" height="4"/></g></svg>
<div class="a t" style="top:80.2px;font-size:8.9px;line-height:20px;color:#f0f0f0;-webkit-text-stroke:0.26px #f0f0f0;transform:scaleX(0.917);transform-origin:0 50%;left:1214.4px;">Add-ins</div>
<div class="a" style="left:1250.35px;top:61px;width:0.9px;height:43px;background:#3c3c3c;"></div>
<svg class="a" style="left:1262.4px;top:60.8px;width:23.6px;height:21.6px;" viewBox="0 0 11.8 10.8"><rect x=".3" y=".3" width="11.2" height="10.2" fill="none" stroke="#d2d2d2" stroke-width=".6"/><path d="M.3 2.6H11.5M.3 8.2H11.5M2.4 .3V10.5M9.6 .3V10.5" stroke="#8c8c8c" stroke-width=".35"/><circle cx="5.6" cy="4.6" r="2.7" fill="#1f1f1f" stroke="#dcdcdc" stroke-width=".6"/><path d="M5.6 4.6V2.4A2.2 2.2 0 0 1 7.8 4.6Z" fill="#4a86e8"/><path d="M5.6 4.6H3.4A2.2 2.2 0 0 1 5.6 2.4Z" fill="#e6e6e6"/><path d="M7.6 6.6L10 9.4" stroke="#dcdcdc" stroke-width=".8"/></svg>
<div class="a t" style="top:80.2px;font-size:8.9px;line-height:20px;color:#f0f0f0;-webkit-text-stroke:0.26px #f0f0f0;transform:scaleX(0.874);transform-origin:0 50%;left:1260.4px;">Analyze</div>
<div class="a t" style="top:89.2px;font-size:8.9px;line-height:20px;color:#f0f0f0;-webkit-text-stroke:0.26px #f0f0f0;transform:scaleX(0.832);transform-origin:0 50%;left:1266.4px;">Data</div>
<svg class="a" style="left:1294px;top:61.6px;width:22.8px;height:20.4px;" viewBox="0 0 11.4 10.2"><defs><linearGradient id="cpa" x1="0" y1="0" x2="0" y2="1"><stop offset="0" stop-color="#3b7fe6"/><stop offset=".45" stop-color="#37b0a8"/><stop offset=".75" stop-color="#58b84a"/><stop offset="1" stop-color="#c9c244"/></linearGradient><linearGradient id="cpb" x1="0" y1="0" x2="0" y2="1"><stop offset="0" stop-color="#a874e6"/><stop offset=".22" stop-color="#d070b0"/><stop offset=".42" stop-color="#e8705a"/><stop offset="1" stop-color="#e9683c"/></linearGradient></defs><path d="M3.4 .4H7.2Q8.6 .4 9 1.6L9.5 3H7.4Q6.6 3 6.3 3.8L4.9 7.8Q4.6 8.6 3.7 8.6H1.5Q.1 8.6 .5 7.2L2 1.6Q2.4 .4 3.4 .4Z" fill="url(#cpa)"/><path d="M8.4 1.9Q10.8 1.7 11 3.6L10 8.2Q9.5 10.2 7.6 10.2H4.8Q3 10.2 3.2 8.6L5.6 8.5Q6.8 8.4 7.1 7.4L8.1 4.2Q8.4 3 7.9 2.3Z" fill="url(#cpb)"/><path d="M6.6 3.4L5.2 8.2" stroke="#1f1f1f" stroke-width=".9" fill="none"/></svg>
<div class="a t" style="top:80.2px;font-size:8.9px;line-height:20px;color:#f0f0f0;-webkit-text-stroke:0.26px #f0f0f0;transform:scaleX(0.897);transform-origin:0 50%;left:1293.2px;">Copilot</div>
<div class="a" style="left:1326.35px;top:61px;width:0.9px;height:43px;background:#3c3c3c;"></div>
<svg class="a" style="left:1340.8px;top:59.2px;width:24px;height:24px;" viewBox="-6 -6 12 12"><g fill="none" stroke="#4c4c4c" stroke-width="0.5" stroke-linecap="round" stroke-linejoin="round"><path d="M-1.6 -4.2H2.6L4.8 -.6L2.6 3H.6"/><path d="M-1.6 -4.2L-3.4 -1.2"/><circle cx="-2.2" cy="1.6" r="2.6"/></g></svg>
<div class="a t" style="top:80.2px;font-size:8.9px;line-height:20px;color:#f0f0f0;-webkit-text-stroke:0.26px #f0f0f0;transform:scaleX(0.901);transform-origin:0 50%;left:1343.2px;">Show</div>
<div class="a t" style="top:89.2px;font-size:8.9px;line-height:20px;color:#f0f0f0;-webkit-text-stroke:0.26px #f0f0f0;transform:scaleX(0.895);transform-origin:0 50%;left:1336px;">Taskpane</div>
<div class="a" style="left:14px;top:106.4px;width:1366px;height:1px;background:#141414;"></div>
<div class="a" style="left:141.2px;top:109.4px;width:1223.2px;height:15.8px;background:#323232;"></div>
<div class="a" style="left:1366px;top:108.8px;width:11.2px;height:17px;background:#161616;"></div>
<svg class="a" style="left:1369.4px;top:115.9px;width:4.4px;height:2.6px;" viewBox="0 0 2.2 1.3"><path d="M0 0H2.2L1.1 1.3Z" fill="#ededed"/></svg>
<div class="a t" style="top:107.4px;font-size:9.2px;line-height:20px;color:#dcdcdc;font-weight:700;transform:scaleX(0.987);transform-origin:0 50%;left:20.4px;">C6</div>
<svg class="a" style="left:68px;top:110.8px;width:4.4px;height:4px;" viewBox="0 0 2.2 2"><path d="M0 2L1.1 0L2.2 2Z" fill="#d0d0d0"/></svg>
<svg class="a" style="left:68px;top:119.6px;width:4.4px;height:4px;" viewBox="0 0 2.2 2"><path d="M0 0H2.2L1.1 2Z" fill="#d0d0d0"/></svg>
<svg class="a" style="left:84px;top:113.6px;width:8px;height:8px;" viewBox="-2 -2 4 4"><g fill="none" stroke="#4f4f4f" stroke-width="0.5" stroke-linecap="round" stroke-linejoin="round"><path d="M-1.3 -1.3L1.3 1.3M1.3 -1.3L-1.3 1.3"/></g></svg>
<svg class="a" style="left:104.8px;top:113.6px;width:8px;height:8px;" viewBox="-2 -2 4 4"><g fill="none" stroke="#4f4f4f" stroke-width="0.5" stroke-linecap="round" stroke-linejoin="round"><path d="M-1.6 .2L-.5 1.3L1.7 -1.3"/></g></svg>
<div class="a t" style="top:107.2px;font-size:12px;line-height:20px;color:#bdbdbd;font-family:'Liberation Serif', serif;font-style:italic;left:120.8px;">f</div>
<div class="a t" style="top:108.4px;font-size:8.8px;line-height:20px;color:#bdbdbd;font-family:'Liberation Serif', serif;font-style:italic;left:125.2px;">x</div>
<svg class="a" style="left:134.9px;top:117px;width:3.8px;height:2px;" viewBox="0 0 1.9 1"><path d="M0 0L0.95 1L1.9 0" fill="none" stroke="#d0d0d0" stroke-width="0.5" stroke-linecap="round"/></svg>
<div class="a" style="left:14px;top:126.2px;width:888.4px;height:4px;background:#868686;"></div>
<div class="a" style="left:902.4px;top:126.4px;width:477.6px;height:3px;background:#6e6e6e;"></div>
<div class="a" style="left:14px;top:129px;width:888.4px;height:704px;background:#4b4b4d;"></div>
<div class="a" style="left:72.8px;top:187.6px;width:829.2px;height:644.6px;background:#ffffff;"></div>
<div class="a" style="left:57.8px;top:130.6px;width:7.6px;height:7.6px;background:#e4e4e4;border-radius:0.8px;"></div>
<div class="a t" style="top:124.5px;font-size:6px;line-height:20px;color:#333;font-weight:700;left:-138.4px;width:400px;text-align:center;"><span>1</span></div>
<div class="a" style="left:57.8px;top:139px;width:7.6px;height:7.6px;background:#e4e4e4;border-radius:0.8px;"></div>
<div class="a t" style="top:132.9px;font-size:6px;line-height:20px;color:#333;font-weight:700;left:-138.4px;width:400px;text-align:center;"><span>2</span></div>
<div class="a" style="left:57.8px;top:147.4px;width:7.6px;height:7.6px;background:#e4e4e4;border-radius:0.8px;"></div>
<div class="a t" style="top:141.3px;font-size:6px;line-height:20px;color:#333;font-weight:700;left:-138.4px;width:400px;text-align:center;"><span>3</span></div>
<div class="a" style="left:57.8px;top:155.8px;width:7.6px;height:7.6px;background:#e4e4e4;border-radius:0.8px;"></div>
<div class="a t" style="top:149.7px;font-size:6px;line-height:20px;color:#333;font-weight:700;left:-138.4px;width:400px;text-align:center;"><span>4</span></div>
<div class="a" style="left:14.8px;top:173.4px;width:7.8px;height:7.8px;background:#e4e4e4;border-radius:0.8px;"></div>
<div class="a t" style="top:167.4px;font-size:6px;line-height:20px;color:#333;font-weight:700;left:-181.3px;width:400px;text-align:center;"><span>1</span></div>
<div class="a" style="left:23.4px;top:173.4px;width:7.8px;height:7.8px;background:#e4e4e4;border-radius:0.8px;"></div>
<div class="a t" style="top:167.4px;font-size:6px;line-height:20px;color:#333;font-weight:700;left:-172.7px;width:400px;text-align:center;"><span>2</span></div>
<div class="a" style="left:32px;top:173.4px;width:7.8px;height:7.8px;background:#e4e4e4;border-radius:0.8px;"></div>
<div class="a t" style="top:167.4px;font-size:6px;line-height:20px;color:#333;font-weight:700;left:-164.1px;width:400px;text-align:center;"><span>3</span></div>
<div class="a" style="left:40.6px;top:173.4px;width:7.8px;height:7.8px;background:#e4e4e4;border-radius:0.8px;"></div>
<div class="a t" style="top:167.4px;font-size:6px;line-height:20px;color:#333;font-weight:700;left:-155.5px;width:400px;text-align:center;"><span>4</span></div>
<div class="a" style="left:50.6px;top:166.4px;width:851.4px;height:21.2px;background:#141414;"></div>
<div class="a" style="left:50.6px;top:187.6px;width:22.2px;height:644.6px;background:#141414;"></div>
<svg class="a" style="left:52.4px;top:168.4px;width:18.8px;height:18px;" viewBox="0 0 9.4 9"><path d="M9.4 0V9H0Z" fill="#5a5a5a"/></svg>
<div class="a" style="left:72px;top:166.4px;width:1px;height:21.2px;background:#3c3c3c;"></div>
<div class="a" style="left:339.8px;top:166.4px;width:64.6px;height:21.2px;background:#4a4a4a;"></div>
<div class="a" style="left:339.8px;top:186.6px;width:64.6px;height:1.2px;background:#2f8f57;"></div>
<div class="a t" style="top:167.2px;font-size:10px;line-height:20px;color:#dcdcdc;font-weight:700;left:-26px;width:400px;text-align:center;"><span>A</span></div>
<div class="a" style="left:274.8px;top:168px;width:0.8px;height:18px;background:#2e2e2e;"></div>
<div class="a t" style="top:167.2px;font-size:10px;line-height:20px;color:#dcdcdc;font-weight:700;left:107.5px;width:400px;text-align:center;"><span>B</span></div>
<div class="a" style="left:339.4px;top:168px;width:0.8px;height:18px;background:#2e2e2e;"></div>
<div class="a t" style="top:167.2px;font-size:10px;line-height:20px;color:#dcdcdc;font-weight:700;left:172.1px;width:400px;text-align:center;"><span>C</span></div>
<div class="a" style="left:404px;top:168px;width:0.8px;height:18px;background:#2e2e2e;"></div>
<div class="a t" style="top:167.2px;font-size:10px;line-height:20px;color:#dcdcdc;font-weight:700;left:236.7px;width:400px;text-align:center;"><span>D</span></div>
<div class="a" style="left:468.6px;top:168px;width:0.8px;height:18px;background:#2e2e2e;"></div>
<div class="a t" style="top:167.2px;font-size:10px;line-height:20px;color:#dcdcdc;font-weight:700;left:301.3px;width:400px;text-align:center;"><span>E</span></div>
<div class="a" style="left:533.2px;top:168px;width:0.8px;height:18px;background:#2e2e2e;"></div>
<div class="a t" style="top:167.2px;font-size:10px;line-height:20px;color:#dcdcdc;font-weight:700;left:365.9px;width:400px;text-align:center;"><span>F</span></div>
<div class="a" style="left:597.8px;top:168px;width:0.8px;height:18px;background:#2e2e2e;"></div>
<div class="a t" style="top:167.2px;font-size:10px;line-height:20px;color:#dcdcdc;font-weight:700;left:430.5px;width:400px;text-align:center;"><span>G</span></div>
<div class="a" style="left:662.4px;top:168px;width:0.8px;height:18px;background:#2e2e2e;"></div>
<div class="a t" style="top:167.2px;font-size:10px;line-height:20px;color:#dcdcdc;font-weight:700;left:495.1px;width:400px;text-align:center;"><span>H</span></div>
<div class="a" style="left:727px;top:168px;width:0.8px;height:18px;background:#2e2e2e;"></div>
<div class="a t" style="top:167.2px;font-size:10px;line-height:20px;color:#dcdcdc;font-weight:700;left:559.7px;width:400px;text-align:center;"><span>I</span></div>
<div class="a" style="left:791.6px;top:168px;width:0.8px;height:18px;background:#2e2e2e;"></div>
<div class="a t" style="top:167.2px;font-size:10px;line-height:20px;color:#dcdcdc;font-weight:700;left:624.3px;width:400px;text-align:center;"><span>J</span></div>
<div class="a" style="left:856.2px;top:168px;width:0.8px;height:18px;background:#2e2e2e;"></div>
<div class="a t" style="top:167.2px;font-size:10px;line-height:20px;color:#dcdcdc;font-weight:700;left:688.9px;width:400px;text-align:center;"><span>K</span></div>
<div class="a" style="left:50.6px;top:202.2px;width:21.8px;height:0.7px;background:#303030;"></div>
<div class="a t" style="top:185.3px;font-size:10px;line-height:20px;color:#e2e2e2;font-weight:700;left:-138.4px;width:400px;text-align:center;"><span>1</span></div>
<div class="a" style="left:50.6px;top:215.6px;width:21.8px;height:0.7px;background:#303030;"></div>
<div class="a t" style="top:199.5px;font-size:10px;line-height:20px;color:#e2e2e2;font-weight:700;left:-138.4px;width:400px;text-align:center;"><span>2</span></div>
<div class="a" style="left:50.6px;top:228px;width:21.8px;height:0.7px;background:#303030;"></div>
<div class="a t" style="top:212.4px;font-size:10px;line-height:20px;color:#e2e2e2;font-weight:700;left:-138.4px;width:400px;text-align:center;"><span>3</span></div>
<div class="a" style="left:50.6px;top:241.8px;width:21.8px;height:0.7px;background:#303030;"></div>
<div class="a t" style="top:225.5px;font-size:10px;line-height:20px;color:#e2e2e2;font-weight:700;left:-138.4px;width:400px;text-align:center;"><span>4</span></div>
<div class="a" style="left:50.6px;top:256.2px;width:21.8px;height:0.7px;background:#303030;"></div>
<div class="a t" style="top:239.6px;font-size:10px;line-height:20px;color:#e2e2e2;font-weight:700;left:-138.4px;width:400px;text-align:center;"><span>5</span></div>
<div class="a" style="left:50.6px;top:256.6px;width:21.8px;height:13px;background:#4a4a4a;"></div>
<div class="a" style="left:71.4px;top:256.6px;width:1px;height:13px;background:#2f8f57;"></div>
<div class="a" style="left:50.6px;top:269.2px;width:21.8px;height:0.7px;background:#303030;"></div>
<div class="a t" style="top:253.3px;font-size:10px;line-height:20px;color:#b9b9b9;font-weight:700;left:-138.4px;width:400px;text-align:center;"><span>6</span></div>
<div class="a" style="left:50.6px;top:282.64px;width:21.8px;height:0.7px;background:#303030;"></div>
<div class="a t" style="top:266.52px;font-size:10px;line-height:20px;color:#e2e2e2;font-weight:700;left:-138.4px;width:400px;text-align:center;"><span>7</span></div>
<div class="a" style="left:50.6px;top:295.42px;width:21.8px;height:0.7px;background:#303030;"></div>
<div class="a t" style="top:279.63px;font-size:10px;line-height:20px;color:#e2e2e2;font-weight:700;left:-138.4px;width:400px;text-align:center;"><span>8</span></div>
<div class="a" style="left:50.6px;top:308.2px;width:21.8px;height:0.7px;background:#303030;"></div>
<div class="a t" style="top:292.41px;font-size:10px;line-height:20px;color:#e2e2e2;font-weight:700;left:-138.4px;width:400px;text-align:center;"><span>9</span></div>
<div class="a" style="left:50.6px;top:320.98px;width:21.8px;height:0.7px;background:#303030;"></div>
<div class="a t" style="top:305.19px;font-size:10px;line-height:20px;color:#e2e2e2;font-weight:700;left:-138.4px;width:400px;text-align:center;"><span>10</span></div>
<div class="a" style="left:50.6px;top:333.76px;width:21.8px;height:0.7px;background:#303030;"></div>
<div class="a t" style="top:317.97px;font-size:10px;line-height:20px;color:#e2e2e2;font-weight:700;left:-138.4px;width:400px;text-align:center;"><span>11</span></div>
<div class="a" style="left:50.6px;top:346.54px;width:21.8px;height:0.7px;background:#303030;"></div>
<div class="a t" style="top:330.75px;font-size:10px;line-height:20px;color:#e2e2e2;font-weight:700;left:-138.4px;width:400px;text-align:center;"><span>12</span></div>
<div class="a" style="left:50.6px;top:359.32px;width:21.8px;height:0.7px;background:#303030;"></div>
<div class="a t" style="top:343.53px;font-size:10px;line-height:20px;color:#e2e2e2;font-weight:700;left:-138.4px;width:400px;text-align:center;"><span>13</span></div>
<div class="a" style="left:50.6px;top:372.1px;width:21.8px;height:0.7px;background:#303030;"></div>
<div class="a t" style="top:356.31px;font-size:10px;line-height:20px;color:#e2e2e2;font-weight:700;left:-138.4px;width:400px;text-align:center;"><span>14</span></div>
<div class="a" style="left:50.6px;top:384.88px;width:21.8px;height:0.7px;background:#303030;"></div>
<div class="a t" style="top:369.09px;font-size:10px;line-height:20px;color:#e2e2e2;font-weight:700;left:-138.4px;width:400px;text-align:center;"><span>15</span></div>
<div class="a" style="left:50.6px;top:397.66px;width:21.8px;height:0.7px;background:#303030;"></div>
<div class="a t" style="top:381.87px;font-size:10px;line-height:20px;color:#e2e2e2;font-weight:700;left:-138.4px;width:400px;text-align:center;"><span>16</span></div>
<div class="a" style="left:50.6px;top:410.44px;width:21.8px;height:0.7px;background:#303030;"></div>
<div class="a t" style="top:394.65px;font-size:10px;line-height:20px;color:#e2e2e2;font-weight:700;left:-138.4px;width:400px;text-align:center;"><span>17</span></div>
<div class="a" style="left:50.6px;top:423.22px;width:21.8px;height:0.7px;background:#303030;"></div>
<div class="a t" style="top:407.43px;font-size:10px;line-height:20px;color:#e2e2e2;font-weight:700;left:-138.4px;width:400px;text-align:center;"><span>18</span></div>
<div class="a" style="left:50.6px;top:436px;width:21.8px;height:0.7px;background:#303030;"></div>
<div class="a t" style="top:420.21px;font-size:10px;line-height:20px;color:#e2e2e2;font-weight:700;left:-138.4px;width:400px;text-align:center;"><span>19</span></div>
<div class="a" style="left:50.6px;top:448.78px;width:21.8px;height:0.7px;background:#303030;"></div>
<div class="a t" style="top:432.99px;font-size:10px;line-height:20px;color:#e2e2e2;font-weight:700;left:-138.4px;width:400px;text-align:center;"><span>20</span></div>
<div class="a" style="left:50.6px;top:461.56px;width:21.8px;height:0.7px;background:#303030;"></div>
<div class="a t" style="top:445.77px;font-size:10px;line-height:20px;color:#e2e2e2;font-weight:700;left:-138.4px;width:400px;text-align:center;"><span>21</span></div>
<div class="a" style="left:50.6px;top:474.34px;width:21.8px;height:0.7px;background:#303030;"></div>
<div class="a t" style="top:458.55px;font-size:10px;line-height:20px;color:#e2e2e2;font-weight:700;left:-138.4px;width:400px;text-align:center;"><span>22</span></div>
<div class="a" style="left:50.6px;top:487.12px;width:21.8px;height:0.7px;background:#303030;"></div>
<div class="a t" style="top:471.33px;font-size:10px;line-height:20px;color:#e2e2e2;font-weight:700;left:-138.4px;width:400px;text-align:center;"><span>23</span></div>
<div class="a" style="left:50.6px;top:499.9px;width:21.8px;height:0.7px;background:#303030;"></div>
<div class="a t" style="top:484.11px;font-size:10px;line-height:20px;color:#e2e2e2;font-weight:700;left:-138.4px;width:400px;text-align:center;"><span>24</span></div>
<div class="a" style="left:50.6px;top:627.7px;width:21.8px;height:0.7px;background:#303030;"></div>
<div class="a t" style="top:611.91px;font-size:10px;line-height:20px;color:#e2e2e2;font-weight:700;left:-138.4px;width:400px;text-align:center;"><span>34</span></div>
<div class="a" style="left:50.6px;top:640.48px;width:21.8px;height:0.7px;background:#303030;"></div>
<div class="a t" style="top:624.69px;font-size:10px;line-height:20px;color:#e2e2e2;font-weight:700;left:-138.4px;width:400px;text-align:center;"><span>35</span></div>
<div class="a" style="left:50.6px;top:653.26px;width:21.8px;height:0.7px;background:#303030;"></div>
<div class="a t" style="top:637.47px;font-size:10px;line-height:20px;color:#e2e2e2;font-weight:700;left:-138.4px;width:400px;text-align:center;"><span>36</span></div>
<div class="a" style="left:50.6px;top:666.04px;width:21.8px;height:0.7px;background:#303030;"></div>
<div class="a t" style="top:650.25px;font-size:10px;line-height:20px;color:#e2e2e2;font-weight:700;left:-138.4px;width:400px;text-align:center;"><span>37</span></div>
<div class="a" style="left:50.6px;top:678.82px;width:21.8px;height:0.7px;background:#303030;"></div>
<div class="a t" style="top:663.03px;font-size:10px;line-height:20px;color:#e2e2e2;font-weight:700;left:-138.4px;width:400px;text-align:center;"><span>38</span></div>
<div class="a" style="left:50.6px;top:691.6px;width:21.8px;height:0.7px;background:#303030;"></div>
<div class="a t" style="top:675.81px;font-size:10px;line-height:20px;color:#e2e2e2;font-weight:700;left:-138.4px;width:400px;text-align:center;"><span>39</span></div>
<div class="a" style="left:50.6px;top:704.38px;width:21.8px;height:0.7px;background:#303030;"></div>
<div class="a t" style="top:688.59px;font-size:10px;line-height:20px;color:#e2e2e2;font-weight:700;left:-138.4px;width:400px;text-align:center;"><span>40</span></div>
<div class="a" style="left:50.6px;top:717.16px;width:21.8px;height:0.7px;background:#303030;"></div>
<div class="a t" style="top:701.37px;font-size:10px;line-height:20px;color:#e2e2e2;font-weight:700;left:-138.4px;width:400px;text-align:center;"><span>41</span></div>
<div class="a" style="left:50.6px;top:729.94px;width:21.8px;height:0.7px;background:#303030;"></div>
<div class="a t" style="top:714.15px;font-size:10px;line-height:20px;color:#e2e2e2;font-weight:700;left:-138.4px;width:400px;text-align:center;"><span>42</span></div>
<div class="a" style="left:50.6px;top:742.72px;width:21.8px;height:0.7px;background:#303030;"></div>
<div class="a t" style="top:726.93px;font-size:10px;line-height:20px;color:#e2e2e2;font-weight:700;left:-138.4px;width:400px;text-align:center;"><span>43</span></div>
<div class="a" style="left:50.6px;top:755.5px;width:21.8px;height:0.7px;background:#303030;"></div>
<div class="a t" style="top:739.71px;font-size:10px;line-height:20px;color:#e2e2e2;font-weight:700;left:-138.4px;width:400px;text-align:center;"><span>44</span></div>
<div class="a" style="left:50.6px;top:768.28px;width:21.8px;height:0.7px;background:#303030;"></div>
<div class="a t" style="top:752.49px;font-size:10px;line-height:20px;color:#e2e2e2;font-weight:700;left:-138.4px;width:400px;text-align:center;"><span>45</span></div>
<div class="a" style="left:50.6px;top:781.06px;width:21.8px;height:0.7px;background:#303030;"></div>
<div class="a t" style="top:765.27px;font-size:10px;line-height:20px;color:#e2e2e2;font-weight:700;left:-138.4px;width:400px;text-align:center;"><span>46</span></div>
<div class="a" style="left:50.6px;top:793.84px;width:21.8px;height:0.7px;background:#303030;"></div>
<div class="a t" style="top:778.05px;font-size:10px;line-height:20px;color:#e2e2e2;font-weight:700;left:-138.4px;width:400px;text-align:center;"><span>47</span></div>
<div class="a" style="left:50.6px;top:806.62px;width:21.8px;height:0.7px;background:#303030;"></div>
<div class="a t" style="top:790.83px;font-size:10px;line-height:20px;color:#e2e2e2;font-weight:700;left:-138.4px;width:400px;text-align:center;"><span>48</span></div>
<div class="a" style="left:50.6px;top:819.4px;width:21.8px;height:0.7px;background:#303030;"></div>
<div class="a t" style="top:803.61px;font-size:10px;line-height:20px;color:#e2e2e2;font-weight:700;left:-138.4px;width:400px;text-align:center;"><span>49</span></div>
<div class="a" style="left:50.6px;top:832.18px;width:21.8px;height:0.7px;background:#303030;"></div>
<div class="a t" style="top:816.39px;font-size:10px;line-height:20px;color:#e2e2e2;font-weight:700;left:-138.4px;width:400px;text-align:center;"><span>50</span></div>
<div class="a t" style="top:185.5px;font-size:12px;line-height:20px;color:#000;font-weight:700;left:74.4px;">LBO Model - Scenario Analysis</div>
<div class="a t" style="top:199.7px;font-size:10.04px;line-height:20px;color:#000;-webkit-text-stroke:0.1px #000;left:74.4px;">($ in millions)</div>
<div class="a" style="left:72.8px;top:228.4px;width:331.6px;height:13.8px;background:#3a63c2;"></div>
<div class="a t" style="top:225.7px;font-size:10.2px;line-height:20px;color:#ffffff;font-weight:700;left:74.4px;">CASE SELECTION</div>
<div class="a t" style="top:239.8px;font-size:10.2px;line-height:20px;color:#000;font-weight:700;left:74.4px;">Select Case:</div>
<div class="a" style="left:339.8px;top:242.2px;width:64.6px;height:14.4px;background:#ffff00;"></div>
<div class="a t" style="top:239.8px;font-size:10.4px;line-height:20px;color:#15155c;font-weight:700;text-decoration:underline;-webkit-text-stroke:0.1px #15155c;left:172.4px;width:400px;text-align:center;"><span>Upside</span></div>
<div class="a" style="left:339.4px;top:256.2px;width:65.6px;height:14px;background:transparent;border:1.4px solid #2b7d4d;"></div>
<div class="a t" style="top:266.72px;font-size:10.2px;line-height:20px;color:#000;font-weight:700;left:74.4px;">Step 1. Operating Assumptions</div>
<div class="a" style="left:72.8px;top:308.6px;width:719.2px;height:12.78px;background:#dde5f4;"></div>
<div class="a" style="left:72.8px;top:308.4px;width:719.2px;height:1px;background:#30343c;"></div>
<div class="a" style="left:72.8px;top:320.58px;width:719.2px;height:1px;background:#30343c;"></div>
<div class="a t" style="top:305.39px;font-size:10.2px;line-height:20px;color:#000;font-weight:700;left:74.4px;">Operating Assumptions</div>
<div class="a t" style="top:305.39px;font-size:10.04px;line-height:20px;color:#101018;font-weight:700;left:172.1px;width:400px;text-align:center;"><span>2023</span></div>
<svg class="a" style="left:340.4px;top:309.4px;width:5px;height:5px;" viewBox="0 0 2.5 2.5"><path d="M0 0H2.5L0 2.5Z" fill="#1f7f3c"/></svg>
<div class="a t" style="top:305.39px;font-size:10.04px;line-height:20px;color:#101018;font-weight:700;left:236.7px;width:400px;text-align:center;"><span>2024</span></div>
<svg class="a" style="left:405px;top:309.4px;width:5px;height:5px;" viewBox="0 0 2.5 2.5"><path d="M0 0H2.5L0 2.5Z" fill="#1f7f3c"/></svg>
<div class="a t" style="top:305.39px;font-size:10.04px;line-height:20px;color:#101018;font-weight:700;left:301.3px;width:400px;text-align:center;"><span>2025</span></div>
<svg class="a" style="left:469.6px;top:309.4px;width:5px;height:5px;" viewBox="0 0 2.5 2.5"><path d="M0 0H2.5L0 2.5Z" fill="#1f7f3c"/></svg>
<div class="a t" style="top:305.39px;font-size:10.04px;line-height:20px;color:#101018;font-weight:700;left:365.9px;width:400px;text-align:center;"><span>2026</span></div>
<svg class="a" style="left:534.2px;top:309.4px;width:5px;height:5px;" viewBox="0 0 2.5 2.5"><path d="M0 0H2.5L0 2.5Z" fill="#1f7f3c"/></svg>
<div class="a t" style="top:305.39px;font-size:10.04px;line-height:20px;color:#101018;font-weight:700;left:430.5px;width:400px;text-align:center;"><span>2027</span></div>
<svg class="a" style="left:598.8px;top:309.4px;width:5px;height:5px;" viewBox="0 0 2.5 2.5"><path d="M0 0H2.5L0 2.5Z" fill="#1f7f3c"/></svg>
<div class="a t" style="top:305.39px;font-size:10.04px;line-height:20px;color:#101018;font-weight:700;left:495.1px;width:400px;text-align:center;"><span>2028</span></div>
<svg class="a" style="left:663.4px;top:309.4px;width:5px;height:5px;" viewBox="0 0 2.5 2.5"><path d="M0 0H2.5L0 2.5Z" fill="#1f7f3c"/></svg>
<div class="a t" style="top:305.39px;font-size:10.04px;line-height:20px;color:#101018;font-weight:700;left:559.7px;width:400px;text-align:center;"><span>2029</span></div>
<svg class="a" style="left:728px;top:309.4px;width:5px;height:5px;" viewBox="0 0 2.5 2.5"><path d="M0 0H2.5L0 2.5Z" fill="#1f7f3c"/></svg>
<div class="a" style="left:72.8px;top:334.16px;width:719.2px;height:12.78px;background:#d9ddf2;"></div>
<div class="a t" style="top:330.95px;font-size:10.2px;line-height:20px;color:#000;font-weight:700;left:74.4px;">BASE CASE</div>
<div class="a t" style="top:343.73px;font-size:10.04px;line-height:20px;color:#000;-webkit-text-stroke:0.1px #000;left:79.2px;">Revenue Growth</div>
<div class="a t" style="top:343.73px;font-size:10.04px;line-height:20px;color:#0808c2;-webkit-text-stroke:0.14px #0808c2;right:860.2px;text-align:right;">15%</div>
<div class="a t" style="top:343.73px;font-size:10.04px;line-height:20px;color:#0808c2;-webkit-text-stroke:0.14px #0808c2;right:795.6px;text-align:right;">14%</div>
<div class="a t" style="top:343.73px;font-size:10.04px;line-height:20px;color:#0808c2;-webkit-text-stroke:0.14px #0808c2;right:731px;text-align:right;">13%</div>
<div class="a t" style="top:343.73px;font-size:10.04px;line-height:20px;color:#0808c2;-webkit-text-stroke:0.14px #0808c2;right:666.4px;text-align:right;">12%</div>
<div class="a t" style="top:343.73px;font-size:10.04px;line-height:20px;color:#0808c2;-webkit-text-stroke:0.14px #0808c2;right:601.8px;text-align:right;">11%</div>
<div class="a t" style="top:356.51px;font-size:10.04px;line-height:20px;color:#000;-webkit-text-stroke:0.1px #000;left:79.2px;">EBITDA Margin %</div>
<div class="a t" style="top:356.51px;font-size:10.04px;line-height:20px;color:#0808c2;-webkit-text-stroke:0.14px #0808c2;right:860.2px;text-align:right;">25.5%</div>
<div class="a t" style="top:356.51px;font-size:10.04px;line-height:20px;color:#0808c2;-webkit-text-stroke:0.14px #0808c2;right:795.6px;text-align:right;">25.4%</div>
<div class="a t" style="top:356.51px;font-size:10.04px;line-height:20px;color:#0808c2;-webkit-text-stroke:0.14px #0808c2;right:731px;text-align:right;">25.0%</div>
<div class="a t" style="top:356.51px;font-size:10.04px;line-height:20px;color:#0808c2;-webkit-text-stroke:0.14px #0808c2;right:666.4px;text-align:right;">25.2%</div>
<div class="a t" style="top:356.51px;font-size:10.04px;line-height:20px;color:#0808c2;-webkit-text-stroke:0.14px #0808c2;right:601.8px;text-align:right;">25.5%</div>
<div class="a t" style="top:369.29px;font-size:10.04px;line-height:20px;color:#000;-webkit-text-stroke:0.1px #000;left:79.2px;">D&amp;A % of Revenue</div>
<div class="a t" style="top:369.29px;font-size:10.04px;line-height:20px;color:#0808c2;-webkit-text-stroke:0.14px #0808c2;right:860.2px;text-align:right;">5.0%</div>
<div class="a t" style="top:369.29px;font-size:10.04px;line-height:20px;color:#0808c2;-webkit-text-stroke:0.14px #0808c2;right:795.6px;text-align:right;">5.0%</div>
<div class="a t" style="top:369.29px;font-size:10.04px;line-height:20px;color:#0808c2;-webkit-text-stroke:0.14px #0808c2;right:731px;text-align:right;">5.0%</div>
<div class="a t" style="top:369.29px;font-size:10.04px;line-height:20px;color:#0808c2;-webkit-text-stroke:0.14px #0808c2;right:666.4px;text-align:right;">5.0%</div>
<div class="a t" style="top:369.29px;font-size:10.04px;line-height:20px;color:#0808c2;-webkit-text-stroke:0.14px #0808c2;right:601.8px;text-align:right;">5.0%</div>
<div class="a t" style="top:382.07px;font-size:10.04px;line-height:20px;color:#000;-webkit-text-stroke:0.1px #000;left:79.2px;">Capex % of Revenue</div>
<div class="a t" style="top:382.07px;font-size:10.04px;line-height:20px;color:#0808c2;-webkit-text-stroke:0.14px #0808c2;right:860.2px;text-align:right;">3.0%</div>
<div class="a t" style="top:382.07px;font-size:10.04px;line-height:20px;color:#0808c2;-webkit-text-stroke:0.14px #0808c2;right:795.6px;text-align:right;">3.0%</div>
<div class="a t" style="top:382.07px;font-size:10.04px;line-height:20px;color:#0808c2;-webkit-text-stroke:0.14px #0808c2;right:731px;text-align:right;">3.0%</div>
<div class="a t" style="top:382.07px;font-size:10.04px;line-height:20px;color:#0808c2;-webkit-text-stroke:0.14px #0808c2;right:666.4px;text-align:right;">3.0%</div>
<div class="a t" style="top:382.07px;font-size:10.04px;line-height:20px;color:#0808c2;-webkit-text-stroke:0.14px #0808c2;right:601.8px;text-align:right;">3.0%</div>
<div class="a t" style="top:394.85px;font-size:10.04px;line-height:20px;color:#000;-webkit-text-stroke:0.1px #000;left:79.2px;">NWC % of Revenue</div>
<div class="a t" style="top:394.85px;font-size:10.04px;line-height:20px;color:#0808c2;-webkit-text-stroke:0.14px #0808c2;right:860.2px;text-align:right;">12.0%</div>
<div class="a t" style="top:394.85px;font-size:10.04px;line-height:20px;color:#0808c2;-webkit-text-stroke:0.14px #0808c2;right:795.6px;text-align:right;">12.0%</div>
<div class="a t" style="top:394.85px;font-size:10.04px;line-height:20px;color:#0808c2;-webkit-text-stroke:0.14px #0808c2;right:731px;text-align:right;">12.0%</div>
<div class="a t" style="top:394.85px;font-size:10.04px;line-height:20px;color:#0808c2;-webkit-text-stroke:0.14px #0808c2;right:666.4px;text-align:right;">12.0%</div>
<div class="a t" style="top:394.85px;font-size:10.04px;line-height:20px;color:#0808c2;-webkit-text-stroke:0.14px #0808c2;right:601.8px;text-align:right;">12.0%</div>
<div class="a" style="left:72.8px;top:423.62px;width:719.2px;height:12.78px;background:#e0ecd6;"></div>
<div class="a t" style="top:420.41px;font-size:10.2px;line-height:20px;color:#000;font-weight:700;left:74.4px;">UPSIDE CASE</div>
<div class="a t" style="top:433.19px;font-size:10.04px;line-height:20px;color:#000;-webkit-text-stroke:0.1px #000;left:79.2px;">Revenue Growth</div>
<div class="a t" style="top:433.19px;font-size:10.04px;line-height:20px;color:#0808c2;-webkit-text-stroke:0.14px #0808c2;right:860.2px;text-align:right;">16%</div>
<div class="a t" style="top:433.19px;font-size:10.04px;line-height:20px;color:#0808c2;-webkit-text-stroke:0.14px #0808c2;right:795.6px;text-align:right;">15%</div>
<div class="a t" style="top:433.19px;font-size:10.04px;line-height:20px;color:#0808c2;-webkit-text-stroke:0.14px #0808c2;right:731px;text-align:right;">14%</div>
<div class="a t" style="top:433.19px;font-size:10.04px;line-height:20px;color:#0808c2;-webkit-text-stroke:0.14px #0808c2;right:666.4px;text-align:right;">13%</div>
<div class="a t" style="top:433.19px;font-size:10.04px;line-height:20px;color:#0808c2;-webkit-text-stroke:0.14px #0808c2;right:601.8px;text-align:right;">12%</div>
<div class="a t" style="top:445.97px;font-size:10.04px;line-height:20px;color:#000;-webkit-text-stroke:0.1px #000;left:79.2px;">EBITDA Margin %</div>
<div class="a t" style="top:445.97px;font-size:10.04px;line-height:20px;color:#0808c2;-webkit-text-stroke:0.14px #0808c2;right:860.2px;text-align:right;">25.0%</div>
<div class="a t" style="top:445.97px;font-size:10.04px;line-height:20px;color:#0808c2;-webkit-text-stroke:0.14px #0808c2;right:795.6px;text-align:right;">25.5%</div>
<div class="a t" style="top:445.97px;font-size:10.04px;line-height:20px;color:#0808c2;-webkit-text-stroke:0.14px #0808c2;right:731px;text-align:right;">26.0%</div>
<div class="a t" style="top:445.97px;font-size:10.04px;line-height:20px;color:#0808c2;-webkit-text-stroke:0.14px #0808c2;right:666.4px;text-align:right;">26.5%</div>
<div class="a t" style="top:445.97px;font-size:10.04px;line-height:20px;color:#0808c2;-webkit-text-stroke:0.14px #0808c2;right:601.8px;text-align:right;">27.0%</div>
<div class="a t" style="top:458.75px;font-size:10.04px;line-height:20px;color:#000;-webkit-text-stroke:0.1px #000;left:79.2px;">D&amp;A % of Revenue</div>
<div class="a t" style="top:458.75px;font-size:10.04px;line-height:20px;color:#0808c2;-webkit-text-stroke:0.14px #0808c2;right:860.2px;text-align:right;">5.0%</div>
<div class="a t" style="top:458.75px;font-size:10.04px;line-height:20px;color:#0808c2;-webkit-text-stroke:0.14px #0808c2;right:795.6px;text-align:right;">5.0%</div>
<div class="a t" style="top:458.75px;font-size:10.04px;line-height:20px;color:#0808c2;-webkit-text-stroke:0.14px #0808c2;right:731px;text-align:right;">5.0%</div>
<div class="a t" style="top:458.75px;font-size:10.04px;line-height:20px;color:#0808c2;-webkit-text-stroke:0.14px #0808c2;right:666.4px;text-align:right;">5.0%</div>
<div class="a t" style="top:458.75px;font-size:10.04px;line-height:20px;color:#0808c2;-webkit-text-stroke:0.14px #0808c2;right:601.8px;text-align:right;">5.0%</div>
<div class="a t" style="top:471.53px;font-size:10.04px;line-height:20px;color:#000;-webkit-text-stroke:0.1px #000;left:79.2px;">Capex % of Revenue</div>
<div class="a t" style="top:471.53px;font-size:10.04px;line-height:20px;color:#0808c2;-webkit-text-stroke:0.14px #0808c2;right:860.2px;text-align:right;">2.5%</div>
<div class="a t" style="top:471.53px;font-size:10.04px;line-height:20px;color:#0808c2;-webkit-text-stroke:0.14px #0808c2;right:795.6px;text-align:right;">2.5%</div>
<div class="a t" style="top:471.53px;font-size:10.04px;line-height:20px;color:#0808c2;-webkit-text-stroke:0.14px #0808c2;right:731px;text-align:right;">2.5%</div>
<div class="a t" style="top:471.53px;font-size:10.04px;line-height:20px;color:#0808c2;-webkit-text-stroke:0.14px #0808c2;right:666.4px;text-align:right;">2.5%</div>
<div class="a t" style="top:471.53px;font-size:10.04px;line-height:20px;color:#0808c2;-webkit-text-stroke:0.14px #0808c2;right:601.8px;text-align:right;">2.5%</div>
<div class="a t" style="top:484.31px;font-size:10.04px;line-height:20px;color:#000;-webkit-text-stroke:0.1px #000;left:79.2px;">NWC % of Revenue</div>
<div class="a t" style="top:484.31px;font-size:10.04px;line-height:20px;color:#0808c2;-webkit-text-stroke:0.14px #0808c2;right:860.2px;text-align:right;">12.0%</div>
<div class="a t" style="top:484.31px;font-size:10.04px;line-height:20px;color:#0808c2;-webkit-text-stroke:0.14px #0808c2;right:795.6px;text-align:right;">12.0%</div>
<div class="a t" style="top:484.31px;font-size:10.04px;line-height:20px;color:#0808c2;-webkit-text-stroke:0.14px #0808c2;right:731px;text-align:right;">12.0%</div>
<div class="a t" style="top:484.31px;font-size:10.04px;line-height:20px;color:#0808c2;-webkit-text-stroke:0.14px #0808c2;right:666.4px;text-align:right;">12.0%</div>
<div class="a t" style="top:484.31px;font-size:10.04px;line-height:20px;color:#0808c2;-webkit-text-stroke:0.14px #0808c2;right:601.8px;text-align:right;">12.0%</div>
<div class="a" style="left:72.8px;top:513.08px;width:719.2px;height:12.78px;background:#f9e0d4;"></div>
<div class="a t" style="top:509.87px;font-size:10.2px;line-height:20px;color:#000;font-weight:700;left:74.4px;">DOWNSIDE CASE</div>
<div class="a t" style="top:522.65px;font-size:10.04px;line-height:20px;color:#000;-webkit-text-stroke:0.1px #000;left:79.2px;">Revenue Growth</div>
<div class="a t" style="top:522.65px;font-size:10.04px;line-height:20px;color:#0808c2;-webkit-text-stroke:0.14px #0808c2;right:860.2px;text-align:right;">13.5%</div>
<div class="a t" style="top:522.65px;font-size:10.04px;line-height:20px;color:#0808c2;-webkit-text-stroke:0.14px #0808c2;right:795.6px;text-align:right;">12.6%</div>
<div class="a t" style="top:522.65px;font-size:10.04px;line-height:20px;color:#0808c2;-webkit-text-stroke:0.14px #0808c2;right:731px;text-align:right;">11.7%</div>
<div class="a t" style="top:522.65px;font-size:10.04px;line-height:20px;color:#0808c2;-webkit-text-stroke:0.14px #0808c2;right:666.4px;text-align:right;">10.8%</div>
<div class="a t" style="top:522.65px;font-size:10.04px;line-height:20px;color:#0808c2;-webkit-text-stroke:0.14px #0808c2;right:601.8px;text-align:right;">9.9%</div>
<div class="a t" style="top:535.43px;font-size:10.04px;line-height:20px;color:#000;-webkit-text-stroke:0.1px #000;left:79.2px;">EBITDA Margin %</div>
<div class="a t" style="top:535.43px;font-size:10.04px;line-height:20px;color:#0808c2;-webkit-text-stroke:0.14px #0808c2;right:860.2px;text-align:right;">23.0%</div>
<div class="a t" style="top:535.43px;font-size:10.04px;line-height:20px;color:#0808c2;-webkit-text-stroke:0.14px #0808c2;right:795.6px;text-align:right;">22.9%</div>
<div class="a t" style="top:535.43px;font-size:10.04px;line-height:20px;color:#0808c2;-webkit-text-stroke:0.14px #0808c2;right:731px;text-align:right;">22.5%</div>
<div class="a t" style="top:535.43px;font-size:10.04px;line-height:20px;color:#0808c2;-webkit-text-stroke:0.14px #0808c2;right:666.4px;text-align:right;">22.7%</div>
<div class="a t" style="top:535.43px;font-size:10.04px;line-height:20px;color:#0808c2;-webkit-text-stroke:0.14px #0808c2;right:601.8px;text-align:right;">23.0%</div>
<div class="a t" style="top:548.21px;font-size:10.04px;line-height:20px;color:#000;-webkit-text-stroke:0.1px #000;left:79.2px;">D&amp;A % of Revenue</div>
<div class="a t" style="top:548.21px;font-size:10.04px;line-height:20px;color:#0808c2;-webkit-text-stroke:0.14px #0808c2;right:860.2px;text-align:right;">5.0%</div>
<div class="a t" style="top:548.21px;font-size:10.04px;line-height:20px;color:#0808c2;-webkit-text-stroke:0.14px #0808c2;right:795.6px;text-align:right;">5.0%</div>
<div class="a t" style="top:548.21px;font-size:10.04px;line-height:20px;color:#0808c2;-webkit-text-stroke:0.14px #0808c2;right:731px;text-align:right;">5.0%</div>
<div class="a t" style="top:548.21px;font-size:10.04px;line-height:20px;color:#0808c2;-webkit-text-stroke:0.14px #0808c2;right:666.4px;text-align:right;">5.0%</div>
<div class="a t" style="top:548.21px;font-size:10.04px;line-height:20px;color:#0808c2;-webkit-text-stroke:0.14px #0808c2;right:601.8px;text-align:right;">5.0%</div>
<div class="a t" style="top:560.99px;font-size:10.04px;line-height:20px;color:#000;-webkit-text-stroke:0.1px #000;left:79.2px;">Capex % of Revenue</div>
<div class="a t" style="top:560.99px;font-size:10.04px;line-height:20px;color:#0808c2;-webkit-text-stroke:0.14px #0808c2;right:860.2px;text-align:right;">3.0%</div>
<div class="a t" style="top:560.99px;font-size:10.04px;line-height:20px;color:#0808c2;-webkit-text-stroke:0.14px #0808c2;right:795.6px;text-align:right;">3.0%</div>
<div class="a t" style="top:560.99px;font-size:10.04px;line-height:20px;color:#0808c2;-webkit-text-stroke:0.14px #0808c2;right:731px;text-align:right;">3.0%</div>
<div class="a t" style="top:560.99px;font-size:10.04px;line-height:20px;color:#0808c2;-webkit-text-stroke:0.14px #0808c2;right:666.4px;text-align:right;">3.0%</div>
<div class="a t" style="top:560.99px;font-size:10.04px;line-height:20px;color:#0808c2;-webkit-text-stroke:0.14px #0808c2;right:601.8px;text-align:right;">3.0%</div>
<div class="a t" style="top:573.77px;font-size:10.04px;line-height:20px;color:#000;-webkit-text-stroke:0.1px #000;left:79.2px;">NWC % of Revenue</div>
<div class="a t" style="top:573.77px;font-size:10.04px;line-height:20px;color:#0808c2;-webkit-text-stroke:0.14px #0808c2;right:860.2px;text-align:right;">12.0%</div>
<div class="a t" style="top:573.77px;font-size:10.04px;line-height:20px;color:#0808c2;-webkit-text-stroke:0.14px #0808c2;right:795.6px;text-align:right;">12.0%</div>
<div class="a t" style="top:573.77px;font-size:10.04px;line-height:20px;color:#0808c2;-webkit-text-stroke:0.14px #0808c2;right:731px;text-align:right;">12.0%</div>
<div class="a t" style="top:573.77px;font-size:10.04px;line-height:20px;color:#0808c2;-webkit-text-stroke:0.14px #0808c2;right:666.4px;text-align:right;">12.0%</div>
<div class="a t" style="top:573.77px;font-size:10.04px;line-height:20px;color:#0808c2;-webkit-text-stroke:0.14px #0808c2;right:601.8px;text-align:right;">12.0%</div>
<div class="a t" style="top:612.11px;font-size:10.2px;line-height:20px;color:#000;font-weight:700;left:74.4px;">Step 2. Model Assumptions</div>
<div class="a" style="left:72.8px;top:653.66px;width:331.6px;height:12.78px;background:#dde5f4;"></div>
<div class="a" style="left:72.8px;top:653.46px;width:331.6px;height:1px;background:#30343c;"></div>
<div class="a" style="left:72.8px;top:665.64px;width:331.6px;height:1px;background:#30343c;"></div>
<div class="a t" style="top:650.45px;font-size:10.2px;line-height:20px;color:#000;font-weight:700;left:74.4px;">Transaction Assumptions</div>
<div class="a t" style="top:663.23px;font-size:10.04px;line-height:20px;color:#000;-webkit-text-stroke:0.1px #000;left:74.4px;">LTM EBITDA</div>
<div class="a t" style="top:663.23px;font-size:10.04px;line-height:20px;color:#0808c2;-webkit-text-stroke:0.14px #0808c2;right:989.4px;text-align:right;">$20</div>
<div class="a t" style="top:676.01px;font-size:10.04px;line-height:20px;color:#000;-webkit-text-stroke:0.1px #000;left:74.4px;">Entry Multiple</div>
<div class="a t" style="top:676.01px;font-size:10.04px;line-height:20px;color:#0808c2;-webkit-text-stroke:0.14px #0808c2;right:989.4px;text-align:right;">11.0x</div>
<div class="a t" style="top:688.79px;font-size:10.2px;line-height:20px;color:#000;font-weight:700;left:74.4px;">Purchase Enterprise Value</div>
<div class="a t" style="top:688.79px;font-size:10.04px;line-height:20px;color:#000;font-weight:700;right:989.4px;text-align:right;">$224</div>
<div class="a t" style="top:714.35px;font-size:10.04px;line-height:20px;color:#000;-webkit-text-stroke:0.1px #000;left:74.4px;">Transaction Fees</div>
<div class="a t" style="top:714.35px;font-size:10.04px;line-height:20px;color:#0808c2;-webkit-text-stroke:0.14px #0808c2;right:989.4px;text-align:right;">$7</div>
<div class="a t" style="top:727.13px;font-size:10.04px;line-height:20px;color:#000;-webkit-text-stroke:0.1px #000;left:74.4px;">Financing Fees</div>
<div class="a t" style="top:727.13px;font-size:10.04px;line-height:20px;color:#0808c2;-webkit-text-stroke:0.14px #0808c2;right:989.4px;text-align:right;">$2</div>
<div class="a t" style="top:739.91px;font-size:10.04px;line-height:20px;color:#000;-webkit-text-stroke:0.1px #000;left:74.4px;">Financing Fees Amort. Period (yrs)</div>
<div class="a t" style="top:739.91px;font-size:10.04px;line-height:20px;color:#0808c2;-webkit-text-stroke:0.14px #0808c2;right:989.4px;text-align:right;">7</div>
<div class="a t" style="top:752.69px;font-size:10.04px;line-height:20px;color:#000;-webkit-text-stroke:0.1px #000;left:74.4px;">Cash to Balance Sheet</div>
<div class="a t" style="top:752.69px;font-size:10.04px;line-height:20px;color:#0808c2;-webkit-text-stroke:0.14px #0808c2;right:989.4px;text-align:right;">$5</div>
<div class="a t" style="top:765.47px;font-size:10.04px;line-height:20px;color:#000;-webkit-text-stroke:0.1px #000;left:74.4px;">Tax Rate</div>
<div class="a t" style="top:765.47px;font-size:10.04px;line-height:20px;color:#0808c2;-webkit-text-stroke:0.14px #0808c2;right:989.4px;text-align:right;">25.0%</div>
<div class="a" style="left:72.8px;top:794.24px;width:460.8px;height:12.78px;background:#dde5f4;"></div>
<div class="a" style="left:72.8px;top:794.04px;width:460.8px;height:1px;background:#30343c;"></div>
<div class="a" style="left:72.8px;top:806.22px;width:460.8px;height:1px;background:#30343c;"></div>
<div class="a t" style="top:791.03px;font-size:10.2px;line-height:20px;color:#000;font-weight:700;left:74.4px;">Debt Structure</div>
<div class="a t" style="top:791.03px;font-size:10.04px;line-height:20px;color:#000;font-weight:700;right:1054px;text-align:right;">$ Amount</div>
<div class="a t" style="top:791.03px;font-size:10.04px;line-height:20px;color:#000;font-weight:700;right:989.4px;text-align:right;">Rate</div>
<div class="a t" style="top:791.03px;font-size:10.04px;line-height:20px;color:#000;font-weight:700;right:924.8px;text-align:right;">Floor</div>
<div class="a t" style="top:791.03px;font-size:10.04px;line-height:20px;color:#000;font-weight:700;right:860.2px;text-align:right;">% Amort.</div>
<div class="a t" style="top:803.81px;font-size:10.04px;line-height:20px;color:#000;-webkit-text-stroke:0.1px #000;left:74.4px;">Revolver</div>
<div class="a t" style="top:803.81px;font-size:10.04px;line-height:20px;color:#0808c2;-webkit-text-stroke:0.14px #0808c2;right:1054px;text-align:right;">-</div>
<div class="a t" style="top:803.81px;font-size:10.04px;line-height:20px;color:#0808c2;-webkit-text-stroke:0.14px #0808c2;right:989.4px;text-align:right;">4.0%</div>
<div class="a t" style="top:803.81px;font-size:10.04px;line-height:20px;color:#0808c2;-webkit-text-stroke:0.14px #0808c2;right:924.8px;text-align:right;">0.0%</div>
<div class="a t" style="top:803.81px;font-size:10.04px;line-height:20px;color:#0808c2;-webkit-text-stroke:0.14px #0808c2;right:860.2px;text-align:right;">0.0%</div>
<div class="a t" style="top:816.59px;font-size:10.04px;line-height:20px;color:#000;-webkit-text-stroke:0.1px #000;left:74.4px;">Term Loan B</div>
<div class="a t" style="top:816.59px;font-size:10.04px;line-height:20px;color:#0808c2;-webkit-text-stroke:0.14px #0808c2;right:1054px;text-align:right;">$100</div>
<div class="a t" style="top:816.59px;font-size:10.04px;line-height:20px;color:#0808c2;-webkit-text-stroke:0.14px #0808c2;right:989.4px;text-align:right;">6.0%</div>
<div class="a t" style="top:816.59px;font-size:10.04px;line-height:20px;color:#0808c2;-webkit-text-stroke:0.14px #0808c2;right:924.8px;text-align:right;">2.0%</div>
<div class="a t" style="top:816.59px;font-size:10.04px;line-height:20px;color:#0808c2;-webkit-text-stroke:0.14px #0808c2;right:860.2px;text-align:right;">5.0%</div>
<svg class="a" style="left:0px;top:0px;width:1392px;height:880px;pointer-events:none;" viewBox="0 0 696 440"><g fill="none" stroke="#d97757" stroke-linecap="round" stroke-linejoin="round"><path d="M37.6 246.3 C35 246.1 33 246.1 31.6 246.5" stroke-width="3.3"/><path d="M31.8 246.6 C30.2 247 29.6 248.5 29.6 251 L29.7 285" stroke-width="5.4"/><path d="M29.7 270 C29.7 285 29.7 295 30 301 C30.2 304.6 31.4 305.4 34 305.5 L38 305.6" stroke-width="4.9"/><path d="M389.2 242 C393 241.6 396.5 241.5 399.4 242.1" stroke-width="4.9"/><path d="M399 242.2 C400.9 242.9 400.3 246 400.3 250 C400.4 268 401.4 286 401.5 300" stroke-width="6.3"/><path d="M401.3 280 C401.6 292 401.9 299 401.3 302.4 C400.6 305.3 396.5 305.2 392.5 305.5" stroke-width="6.3"/><path d="M391.9 305.5 L393.6 305.4" stroke-width="7.8"/></g></svg>
<div class="a t" style="top:496.89px;font-size:10px;line-height:20px;color:rgba(255,235,225,.2);font-weight:700;left:-136.8px;width:400px;text-align:center;"><span>25</span></div>
<div class="a t" style="top:509.67px;font-size:10px;line-height:20px;color:rgba(255,235,225,.2);font-weight:700;left:-136.8px;width:400px;text-align:center;"><span>26</span></div>
<div class="a t" style="top:522.45px;font-size:10px;line-height:20px;color:rgba(255,235,225,.2);font-weight:700;left:-136.8px;width:400px;text-align:center;"><span>27</span></div>
<div class="a t" style="top:535.23px;font-size:10px;line-height:20px;color:rgba(255,235,225,.2);font-weight:700;left:-136.8px;width:400px;text-align:center;"><span>28</span></div>
<div class="a t" style="top:548.01px;font-size:10px;line-height:20px;color:rgba(255,235,225,.2);font-weight:700;left:-136.8px;width:400px;text-align:center;"><span>29</span></div>
<div class="a t" style="top:560.79px;font-size:10px;line-height:20px;color:rgba(255,235,225,.2);font-weight:700;left:-136.8px;width:400px;text-align:center;"><span>30</span></div>
<div class="a t" style="top:573.57px;font-size:10px;line-height:20px;color:rgba(255,235,225,.2);font-weight:700;left:-136.8px;width:400px;text-align:center;"><span>31</span></div>
<div class="a t" style="top:586.35px;font-size:10px;line-height:20px;color:rgba(255,235,225,.2);font-weight:700;left:-136.8px;width:400px;text-align:center;"><span>32</span></div>
<div class="a t" style="top:599.13px;font-size:10px;line-height:20px;color:rgba(255,235,225,.2);font-weight:700;left:-136.8px;width:400px;text-align:center;"><span>33</span></div>
<div class="a" style="left:902px;top:129px;width:478px;height:722px;background:#252525;"></div>
<div class="a" style="left:902px;top:129px;width:1.6px;height:722px;background:#3a3a3a;"></div>
<div class="a t" style="top:129.4px;font-size:10.6px;line-height:20px;color:#f0f0f0;-webkit-text-stroke:0.24px #f0f0f0;transform:scaleX(1.044);transform-origin:0 50%;left:914.4px;">Claude Excel Add-in</div>
<svg class="a" style="left:1358px;top:133px;width:12px;height:12px;" viewBox="-3 -3 6 6"><g fill="none" stroke="#b4b4b4" stroke-width="0.6" stroke-linecap="round" stroke-linejoin="round"><circle cx="0" cy="0" r="2.3" fill="#9e9e9e" stroke="none"/><path d="M-.9 -.9L.9 .9M.9 -.9L-.9 .9" stroke="#2a2a2a" stroke-width=".6"/></g></svg>
<div class="a" style="left:911.4px;top:157.4px;width:459.8px;height:683.4px;background:#f9f7f3;border-radius:8.4px;"></div>
<div class="a" style="left:1358px;top:153px;width:18.4px;height:17.2px;background:#535353;"></div>
<div class="a t" style="top:151.8px;font-size:11.2px;line-height:20px;color:#f4f4f4;font-weight:700;font-family:'Liberation Serif', serif;left:1167.2px;width:400px;text-align:center;"><span>i</span></div>
<div class="a t" style="top:167px;font-size:10.4px;line-height:20px;color:#6b6a66;font-family:'Liberation Serif', serif;transform:scaleX(1.080);transform-origin:0 50%;left:926px;">Sonnet 4.5</div>
<svg class="a" style="left:978.6px;top:176.5px;width:4.4px;height:2.2px;" viewBox="0 0 2.2 1.1"><path d="M0 0L1.1 1.1L2.2 0" fill="none" stroke="#8a8984" stroke-width="0.45" stroke-linecap="round"/></svg>
<svg class="a" style="left:1342.8px;top:169.8px;width:14px;height:14px;" viewBox="-3.5 -3.5 7 7"><g fill="none" stroke="#8d8c87" stroke-width="0.5" stroke-linecap="round" stroke-linejoin="round"><circle cx="0" cy="0" r="2.25" stroke-dasharray="1.2 .55"/><circle cx="0" cy="0" r="1.75" stroke-width=".35"/><circle cx="0" cy="0" r=".75"/></g></svg>
<div class="a" style="left:990.2px;top:209.2px;width:363px;height:55.8px;background:#edebe5;border-radius:7.2px;"></div>
<div class="a t" style="top:214px;font-size:9.8px;line-height:20px;color:#2b2a27;-webkit-text-stroke:0.14px #2b2a27;transform:scaleX(1.076);transform-origin:0 50%;left:1001.6px;">Add a few rows below the 'Upside Case' and add a downside case that's</div>
<div class="a t" style="top:227.2px;font-size:9.8px;line-height:20px;color:#2b2a27;-webkit-text-stroke:0.14px #2b2a27;transform:scaleX(1.076);transform-origin:0 50%;left:1001.6px;">10% lower than  base case across all revenue and EBITDA assumptions.</div>
<div class="a t" style="top:240.6px;font-size:9.8px;line-height:20px;color:#2b2a27;-webkit-text-stroke:0.14px #2b2a27;transform:scaleX(1.082);transform-origin:0 50%;left:1001.6px;">Do not underline the numbers</div>
<div class="a t" style="top:272.2px;font-size:11.2px;line-height:20px;color:#2b2a27;font-family:'Liberation Serif', serif;-webkit-text-stroke:0.18px #2b2a27;transform:scaleX(1.010);transform-origin:0 50%;left:925.6px;">I'll help you add a downside case that's 10% lower than the base case. Let me first check the</div>
<div class="a t" style="top:286px;font-size:11.2px;line-height:20px;color:#2b2a27;font-family:'Liberation Serif', serif;-webkit-text-stroke:0.18px #2b2a27;transform:scaleX(1.038);transform-origin:0 50%;left:925.6px;">current structure to see the base case and upside case data.</div>
<div class="a" style="left:925.6px;top:313px;width:428.8px;height:23.2px;background:#fbfaf7;border-radius:5.2px;border:0.9px solid #e3e0d7;"></div>
<svg class="a" style="left:938.2px;top:319.6px;width:10px;height:10px;" viewBox="-2.5 -2.5 5 5"><g fill="none" stroke="#3f3e3a" stroke-width="0.6" stroke-linecap="round" stroke-linejoin="round"><rect x="-2" y="-1.6" width="4" height="3.2" fill="#aaa8a2"/><path d="M-2 -.4H2M-.6 -1.6V1.6" stroke-width=".45"/></g></svg>
<div class="a t" style="top:314.8px;font-size:8.8px;line-height:20px;color:#43423e;-webkit-text-stroke:0.12px #43423e;transform:scaleX(0.990);transform-origin:0 50%;left:953.6px;">Check base and upside cases</div>
<svg class="a" style="left:1333.6px;top:320.6px;width:8px;height:8px;" viewBox="-2 -2 4 4"><g fill="none" stroke="#7d7c77" stroke-width="0.45" stroke-linecap="round" stroke-linejoin="round"><path d="M-.7 -1.4L.7 0L-.7 1.4"/></g></svg>
<div class="a t" style="top:339.8px;font-size:11.2px;line-height:20px;color:#2b2a27;font-family:'Liberation Serif', serif;-webkit-text-stroke:0.18px #2b2a27;transform:scaleX(1.012);transform-origin:0 50%;left:925.6px;">Now let me check a bit further down to see all the upside case rows:</div>
<div class="a" style="left:925.6px;top:365.6px;width:428.8px;height:23.4px;background:#fbfaf7;border-radius:5.2px;border:0.9px solid #e3e0d7;"></div>
<svg class="a" style="left:938.2px;top:372.3px;width:10px;height:10px;" viewBox="-2.5 -2.5 5 5"><g fill="none" stroke="#3f3e3a" stroke-width="0.6" stroke-linecap="round" stroke-linejoin="round"><rect x="-2" y="-1.6" width="4" height="3.2" fill="#aaa8a2"/><path d="M-2 -.4H2M-.6 -1.6V1.6" stroke-width=".45"/></g></svg>
<div class="a t" style="top:367.5px;font-size:8.8px;line-height:20px;color:#43423e;-webkit-text-stroke:0.12px #43423e;left:953.6px;">Check upside case rows</div>
<svg class="a" style="left:1333.6px;top:373.3px;width:8px;height:8px;" viewBox="-2 -2 4 4"><g fill="none" stroke="#7d7c77" stroke-width="0.45" stroke-linecap="round" stroke-linejoin="round"><path d="M-.7 -1.4L.7 0L-.7 1.4"/></g></svg>
<div class="a t" style="top:391.8px;font-size:11.2px;line-height:20px;color:#2b2a27;font-family:'Liberation Serif', serif;-webkit-text-stroke:0.18px #2b2a27;transform:scaleX(0.994);transform-origin:0 50%;left:925.6px;">Perfect! Now I can see the structure. The Upside Case ends at row 24 (with row 25 blank, row</div>
<div class="a t" style="top:406.4px;font-size:11.2px;line-height:20px;color:#2b2a27;font-family:'Liberation Serif', serif;-webkit-text-stroke:0.18px #2b2a27;left:925.6px;">26 blank). I'll insert a few rows and add the Downside Case that's 10% lower than the base</div>
<div class="a t" style="top:421.4px;font-size:11.2px;line-height:20px;color:#2b2a27;font-family:'Liberation Serif', serif;-webkit-text-stroke:0.18px #2b2a27;transform:scaleX(0.987);transform-origin:0 50%;left:925.6px;">case for Revenue Growth and EBITDA Margin.</div>
<div class="a t" style="top:445.6px;font-size:11.2px;line-height:20px;color:#2b2a27;font-family:'Liberation Serif', serif;-webkit-text-stroke:0.18px #2b2a27;left:925.6px;">Base case values:</div>
<div class="a" style="left:929.6px;top:476.2px;width:3.6px;height:3.6px;background:#2b2a27;border-radius:1.8px;"></div>
<div class="a t" style="top:468px;font-size:11.2px;line-height:20px;color:#2b2a27;font-family:'Liberation Serif', serif;-webkit-text-stroke:0.18px #2b2a27;transform:scaleX(0.911);transform-origin:0 50%;left:940.4px;">Revenue Growth: 15%, 14%, 13%, 12%, 11%</div>
<div class="a" style="left:929.6px;top:493.4px;width:3.6px;height:3.6px;background:#2b2a27;border-radius:1.8px;"></div>
<div class="a t" style="top:485.2px;font-size:11.2px;line-height:20px;color:#2b2a27;font-family:'Liberation Serif', serif;-webkit-text-stroke:0.18px #2b2a27;transform:scaleX(0.920);transform-origin:0 50%;left:940.4px;">EBITDA Margin: 25.5%, 25.4%, 25%, 25.2%, 25.5%</div>
<div class="a t" style="top:509.4px;font-size:11.2px;line-height:20px;color:#2b2a27;font-family:'Liberation Serif', serif;-webkit-text-stroke:0.18px #2b2a27;transform:scaleX(0.965);transform-origin:0 50%;left:925.6px;">Downside case (10% lower):</div>
<div class="a" style="left:929.6px;top:541.4px;width:3.6px;height:3.6px;background:#2b2a27;border-radius:1.8px;"></div>
<div class="a t" style="top:533.2px;font-size:11.2px;line-height:20px;color:#2b2a27;font-family:'Liberation Serif', serif;-webkit-text-stroke:0.18px #2b2a27;transform:scaleX(0.923);transform-origin:0 50%;left:940.4px;">Revenue Growth: 13.5%, 12.6%, 11.7%, 10.8%, 9.9%</div>
<div class="a" style="left:929.6px;top:559.8px;width:3.6px;height:3.6px;background:#2b2a27;border-radius:1.8px;"></div>
<div class="a t" style="top:551.6px;font-size:11.2px;line-height:20px;color:#2b2a27;font-family:'Liberation Serif', serif;-webkit-text-stroke:0.18px #2b2a27;transform:scaleX(0.922);transform-origin:0 50%;left:940.4px;">EBITDA Margin: 22.95%, 22.86%, 22.5%, 22.68%, 22.95%</div>
<div class="a" style="left:925.6px;top:577.2px;width:428.8px;height:23.2px;background:#fbfaf7;border-radius:5.2px;border:0.9px solid #e3e0d7;"></div>
<svg class="a" style="left:938.2px;top:583.8px;width:10px;height:10px;" viewBox="-2.5 -2.5 5 5"><g fill="none" stroke="#4a4945" stroke-width="0.5" stroke-linecap="round" stroke-linejoin="round"><circle cx="0" cy="0" r="1.9"/><path d="M-.9 0H.9M0 -.9V.9"/></g></svg>
<div class="a t" style="top:579px;font-size:8.8px;line-height:20px;color:#43423e;-webkit-text-stroke:0.12px #43423e;transform:scaleX(1.064);transform-origin:0 50%;left:953.6px;">Insert rows for downside</div>
<svg class="a" style="left:1333.6px;top:584.8px;width:8px;height:8px;" viewBox="-2 -2 4 4"><g fill="none" stroke="#7d7c77" stroke-width="0.45" stroke-linecap="round" stroke-linejoin="round"><path d="M-.7 -1.4L.7 0L-.7 1.4"/></g></svg>
<div class="a t" style="top:603.4px;font-size:11.2px;line-height:20px;color:#2b2a27;font-family:'Liberation Serif', serif;-webkit-text-stroke:0.18px #2b2a27;transform:scaleX(1.008);transform-origin:0 50%;left:925.6px;">Now I'll add the downside case section with the calculated values (10% lower than base case):</div>
<div class="a" style="left:925.6px;top:630.4px;width:428.8px;height:23px;background:#fbfaf7;border-radius:5.2px;border:0.9px solid #e3e0d7;"></div>
<svg class="a" style="left:938.2px;top:636.9px;width:10px;height:10px;" viewBox="-2.5 -2.5 5 5"><g fill="none" stroke="#3f3e3a" stroke-width="0.6" stroke-linecap="round" stroke-linejoin="round"><rect x="-2" y="-1.6" width="4" height="3.2" fill="#aaa8a2"/><path d="M-2 -.4H2M-.6 -1.6V1.6" stroke-width=".45"/></g></svg>
<div class="a t" style="top:632.1px;font-size:8.8px;line-height:20px;color:#43423e;-webkit-text-stroke:0.12px #43423e;transform:scaleX(1.012);transform-origin:0 50%;left:953.6px;">Add downside case</div>
<svg class="a" style="left:1333.6px;top:637.9px;width:8px;height:8px;" viewBox="-2 -2 4 4"><g fill="none" stroke="#7d7c77" stroke-width="0.45" stroke-linecap="round" stroke-linejoin="round"><path d="M-.7 -1.4L.7 0L-.7 1.4"/></g></svg>
<div class="a t" style="top:656px;font-size:11.2px;line-height:20px;color:#2b2a27;font-family:'Liberation Serif', serif;-webkit-text-stroke:0.18px #2b2a27;transform:scaleX(1.005);transform-origin:0 50%;left:925.6px;">Perfect! I've successfully added the Downside Case section below the Upside Case. The</div>
<div class="a t" style="top:671.8px;font-size:11.2px;line-height:20px;color:#2b2a27;font-family:'Liberation Serif', serif;-webkit-text-stroke:0.18px #2b2a27;transform:scaleX(1.019);transform-origin:0 50%;left:925.6px;">downside case</div>
<svg class="a" style="left:925.4px;top:708.4px;width:24px;height:24px;" viewBox="-6 -6 12 12"><g fill="none" stroke="#d97757" stroke-width="1.3" stroke-linecap="round" stroke-linejoin="round"><path d="M0.89 0.11L5.06 0.61M0.72 0.54L3.44 2.58M0.35 0.83L1.85 4.32M-0.11 0.89L-0.51 4.27M-0.54 0.72L-3.06 4.08M-0.83 0.35L-3.95 1.69M-0.89 -0.11L-5.06 -0.61M-0.72 -0.54L-3.76 -2.82M-0.35 -0.83L-2.00 -4.69M0.11 -0.89L0.51 -4.27M0.54 -0.72L3.06 -4.08M0.83 -0.35L3.95 -1.69"/><circle cx="0" cy="0" r="1.2" fill="#d97757" stroke="none"/></g></svg>
<div class="a" style="left:924px;top:763px;width:434.8px;height:66px;background:#ffffff;border-radius:8px;border:0.8px solid #ebe8e0;box-shadow:0 1.2px 4px rgba(0,0,0,.05);"></div>
<div class="a t" style="top:772.2px;font-size:9.6px;line-height:20px;color:#85837d;transform:scaleX(1.088);transform-origin:0 50%;left:935.2px;">What can I do for you?</div>
<svg class="a" style="left:934.2px;top:806.6px;width:10px;height:10px;" viewBox="-2.5 -2.5 5 5"><g fill="none" stroke="#55534e" stroke-width="0.35" stroke-linecap="round" stroke-linejoin="round"><path d="M-1.7 -1L-.3 0L-1.7 1Z M.2 -1L1.6 0L.2 1Z"/></g></svg>
<div class="a t" style="top:801.6px;font-size:8.6px;line-height:20px;color:#3a3935;font-weight:700;transform:scaleX(0.977);transform-origin:0 50%;left:949.2px;">Accept all edits</div>
<svg class="a" style="left:1016px;top:811px;width:4px;height:2px;" viewBox="0 0 2 1"><path d="M0 0L1 1L2 0" fill="none" stroke="#77756f" stroke-width="0.4" stroke-linecap="round"/></svg>
<div class="a" style="left:1333.2px;top:803.8px;width:15.6px;height:15.6px;background:#f6f4ee;border-radius:7.8px;border:0.6px solid #e6e3da;"></div>
<svg class="a" style="left:1336px;top:806.6px;width:10px;height:10px;" viewBox="-2.5 -2.5 5 5"><g fill="none" stroke="#45443f" stroke-width="0.5" stroke-linecap="round" stroke-linejoin="round"><circle cx="0" cy="0" r="2.0" fill="#a3a19c"/><path d="M-.8 -.8L.8 .8M.8 -.8L-.8 .8" stroke-width=".55"/></g></svg>
<div class="a" style="left:14px;top:832.4px;width:888.4px;height:18.4px;background:#2a2a2a;"></div>
<svg class="a" style="left:23px;top:837.2px;width:8px;height:8px;" viewBox="-2 -2 4 4"><g fill="none" stroke="#5a5a5a" stroke-width="0.55" stroke-linecap="round" stroke-linejoin="round"><path d="M.7 -1.4L-.7 0L.7 1.4"/></g></svg>
<svg class="a" style="left:37.4px;top:837.2px;width:8px;height:8px;" viewBox="-2 -2 4 4"><g fill="none" stroke="#5a5a5a" stroke-width="0.55" stroke-linecap="round" stroke-linejoin="round"><path d="M-.7 -1.4L.7 0L-.7 1.4"/></g></svg>
<div class="a" style="left:56.2px;top:832.4px;width:108px;height:15px;background:#ffffff;"></div>
<div class="a t" style="top:831px;font-size:8.4px;line-height:20px;color:#2a8449;font-weight:700;transform:scaleX(1.014);transform-origin:0 50%;left:70.4px;">LBO Model - Toggle</div>
<svg class="a" style="left:174.2px;top:837.2px;width:8px;height:8px;" viewBox="-2 -2 4 4"><g fill="none" stroke="#cfcfcf" stroke-width="0.6" stroke-linecap="round" stroke-linejoin="round"><path d="M-1.5 0H1.5M0 -1.5V1.5"/></g></svg>
<div class="a" style="left:190.75px;top:835.2px;width:0.9px;height:13.6px;background:#3a3a3a;"></div>
<div class="a" style="left:14px;top:850.6px;width:1366px;height:15.2px;background:#363636;"></div>
<div class="a t" style="top:848.6px;font-size:8.6px;line-height:20px;color:#e2e2e2;font-weight:700;transform:scaleX(0.930);transform-origin:0 50%;left:31px;">Ready</div>
<svg class="a" style="left:66.6px;top:851.4px;width:14px;height:14px;" viewBox="-3.5 -3.5 7 7"><g fill="none" stroke="#e0e0e0" stroke-width="0.5" stroke-linecap="round" stroke-linejoin="round"><circle cx="-.2" cy="-2" r=".6"/><path d="M-2.4 -.9H2M-.2 -.9V.6M-.2 .6L-1.4 2.4M-.2 .6L.4 1.4"/><path d="M1 1.8L1.8 2.6L3 1"/></g></svg>
<div class="a t" style="top:848.6px;font-size:8.6px;line-height:20px;color:#e2e2e2;font-weight:700;transform:scaleX(0.952);transform-origin:0 50%;left:84.4px;">Accessibility: Good to go</div>
<div class="a" style="left:1154.2px;top:851.2px;width:24.2px;height:13.8px;background:#4d4d4d;"></div>
<svg class="a" style="left:1160.6px;top:852.4px;width:12px;height:12px;" viewBox="-3 -3 6 6"><g fill="none" stroke="#cfcfcf" stroke-width="0.4" stroke-linecap="round" stroke-linejoin="round"><rect x="-2" y="-1.9" width="4" height="3.8" fill="#cfcfcf" stroke="none"/><path d="M-2 -.6H2M-2 .7H2M-.6 -1.9V1.9M.8 -1.9V1.9" stroke="#4d4d4d" stroke-width=".3"/></g></svg>
<svg class="a" style="left:1186.4px;top:852.4px;width:12px;height:12px;" viewBox="-3 -3 6 6"><g fill="none" stroke="#cfcfcf" stroke-width="0.4" stroke-linecap="round" stroke-linejoin="round"><rect x="-2" y="-1.9" width="4" height="3.8" fill="#8a8a8a" stroke="none"/><path d="M-2 -.6H2M-2 .7H2" stroke="#323232" stroke-width=".35"/></g></svg>
<svg class="a" style="left:1211.4px;top:852.4px;width:12px;height:12px;" viewBox="-3 -3 6 6"><g fill="none" stroke="#d0d0d0" stroke-width="0.5" stroke-linecap="round" stroke-linejoin="round"><rect x="-2.1" y="-1.9" width="4.2" height="3.8"/><path d="M-.4 -1.9V-.4H2.1" /></g></svg>
<div class="a" style="left:1235.8px;top:857.8px;width:5.6px;height:1.4px;background:#e6e6e6;"></div>
<div class="a" style="left:1246.4px;top:858px;width:71.2px;height:1.1px;background:#6e6e6e;"></div>
<div class="a" style="left:1280.2px;top:853px;width:11.2px;height:11.2px;background:#9b9b9b;border-radius:5.6px;"></div>
<div class="a" style="left:1322.4px;top:857.8px;width:5.6px;height:1.4px;background:#e6e6e6;"></div>
<div class="a" style="left:1324.5px;top:855.7px;width:1.4px;height:5.6px;background:#e6e6e6;"></div>
<div class="a t" style="top:848.6px;font-size:8.6px;line-height:20px;color:#e2e2e2;font-weight:700;transform:scaleX(1.010);transform-origin:0 50%;left:1341.4px;">140%</div>
</div></div>
</div></div>
</body></html>
